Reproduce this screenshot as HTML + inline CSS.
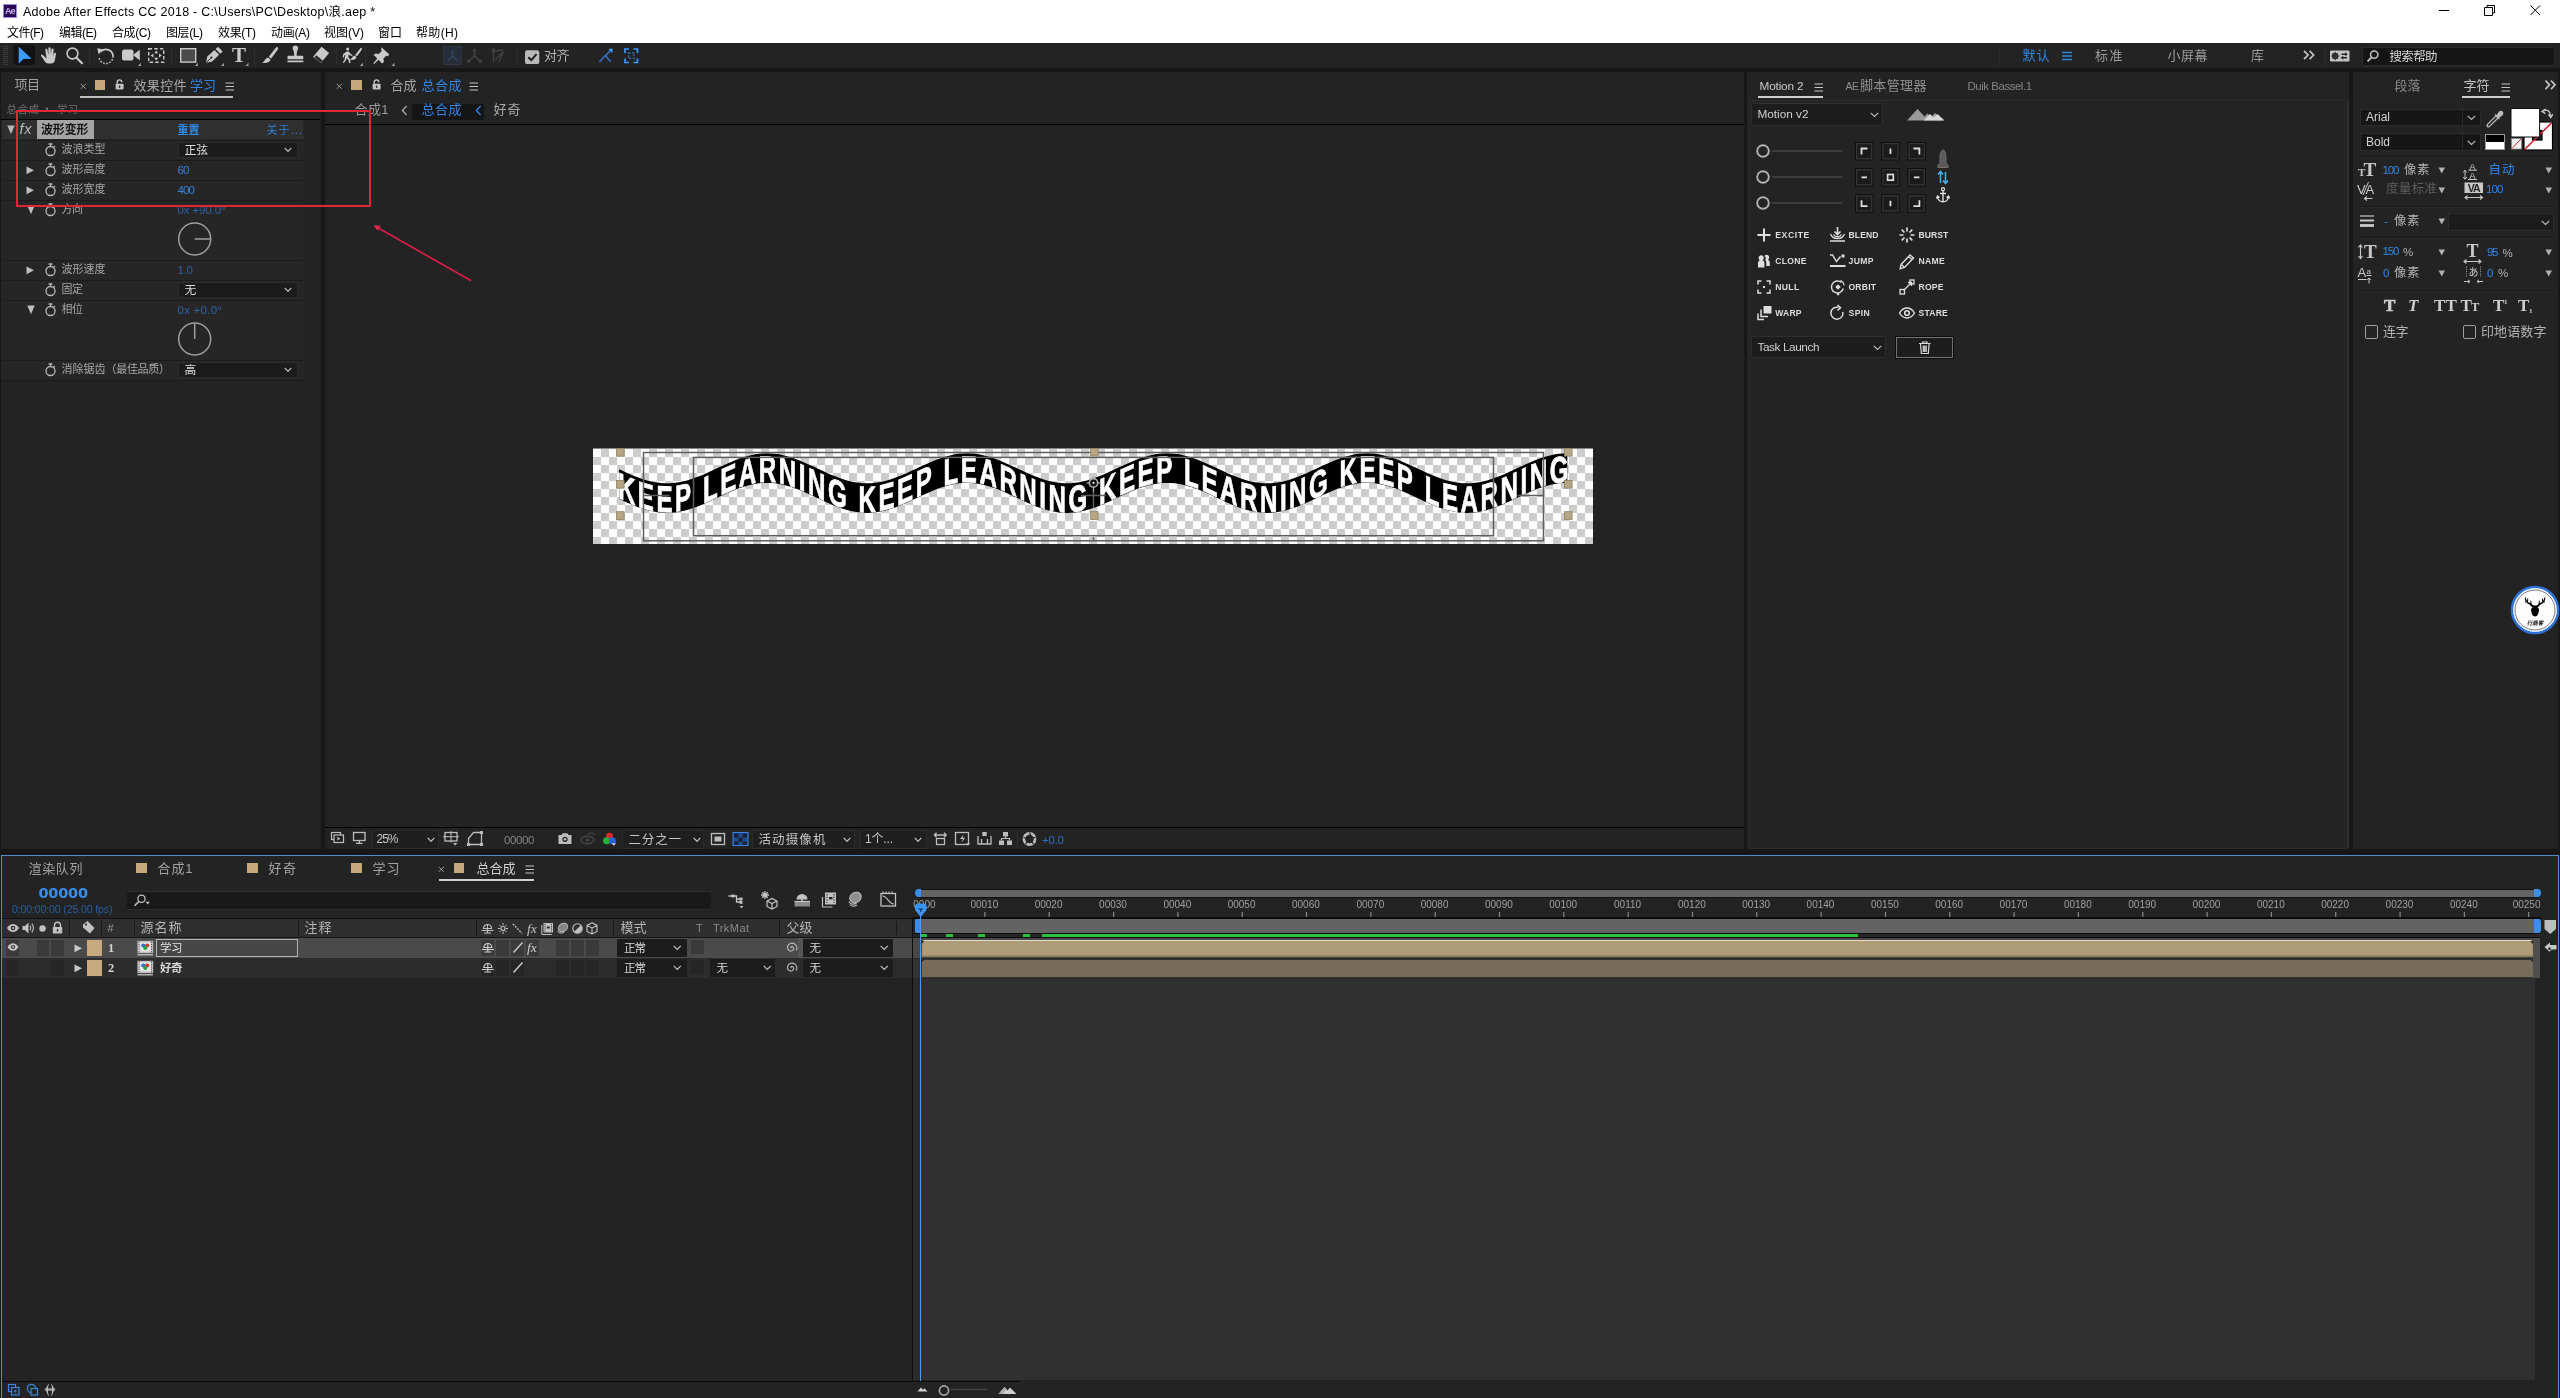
<!DOCTYPE html>
<html lang="zh-CN"><head><meta charset="utf-8"><title>Adobe After Effects CC 2018</title>
<style>
html,body{margin:0;padding:0;}
body{width:2560px;height:1398px;overflow:hidden;background:#171717;position:relative;font-family:"Liberation Sans","Noto Sans CJK SC",sans-serif;font-size:12px;}
#app{position:absolute;left:0;top:0;width:2560px;height:1398px;overflow:hidden;will-change:transform;}
#app div,#app span.t,#app svg{position:absolute;box-sizing:border-box;}
span.t{white-space:pre;display:block;}
svg{overflow:visible;display:block;}
svg{font-family:"Liberation Sans","Noto Sans CJK SC",sans-serif;}
</style></head><body><div id="app">
<div style="left:0px;top:0px;width:2560px;height:43px;background:#ffffff;"></div>
<div style="left:3px;top:4px;width:14px;height:14px;background:#2a0a4e;border:1px solid #9a8ae8;"></div>
<span class="t" style="left:5px;top:4.7px;height:13px;line-height:13px;font-size:9px;color:#c9b6ff;font-weight:700;letter-spacing:-1.02px;">Ae</span>
<span class="t" style="left:23px;top:2.5px;height:18px;line-height:18px;font-size:12.5px;color:#000;letter-spacing:0.25px;">Adobe After Effects CC 2018 - C:\Users\PC\Desktop\浪.aep *</span>
<span class="t" style="left:7px;top:24.9px;height:17px;line-height:17px;font-size:12px;color:#000;letter-spacing:-0.58px;">文件(F)</span>
<span class="t" style="left:59px;top:24.9px;height:17px;line-height:17px;font-size:12px;color:#000;letter-spacing:-0.50px;">编辑(E)</span>
<span class="t" style="left:112px;top:24.9px;height:17px;line-height:17px;font-size:12px;color:#000;letter-spacing:-0.42px;">合成(C)</span>
<span class="t" style="left:166px;top:24.9px;height:17px;line-height:17px;font-size:12px;color:#000;letter-spacing:-0.42px;">图层(L)</span>
<span class="t" style="left:218px;top:24.9px;height:17px;line-height:17px;font-size:12px;color:#000;letter-spacing:-0.33px;">效果(T)</span>
<span class="t" style="left:271px;top:24.9px;height:17px;line-height:17px;font-size:12px;color:#000;letter-spacing:-0.25px;">动画(A)</span>
<span class="t" style="left:324px;top:24.9px;height:17px;line-height:17px;font-size:12px;color:#000;">视图(V)</span>
<span class="t" style="left:378px;top:24.9px;height:17px;line-height:17px;font-size:12px;color:#000;letter-spacing:-0.02px;">窗口</span>
<span class="t" style="left:416px;top:24.9px;height:17px;line-height:17px;font-size:12px;color:#000;letter-spacing:0.33px;">帮助(H)</span>
<svg style="left:2430px;top:0px;" width="130" height="22" viewBox="0 0 130 22"><path d="M9 10.5H19M54.5 7.5H62.5V15.5H54.5ZM57 7.5V5.5H64.5V13H62.5M100.5 5.5L110 15M110 5.5L100.5 15" stroke="#000" stroke-width="1" fill="none"/></svg>
<div style="left:0px;top:43px;width:2560px;height:25px;background:#232323;"></div>
<div style="left:1px;top:72px;width:320px;height:777px;background:#232323;"></div>
<div style="left:325px;top:72px;width:1419px;height:777px;background:#232323;"></div>
<div style="left:1747px;top:72px;width:602px;height:777px;background:#232323;"></div>
<div style="left:2353px;top:72px;width:205px;height:777px;background:#232323;"></div>
<div style="left:1px;top:855px;width:2558px;height:543px;background:#232323;border:1px solid #568ccb;border-top-width:1.400px;border-bottom:none;"></div>
<svg style="left:0px;top:0px;" width="700" height="70" viewBox="0 0 700 70"><rect x="3" y="46" width="5" height="1" fill="#3a3a3a"/><rect x="3" y="48" width="5" height="1" fill="#3a3a3a"/><rect x="3" y="50" width="5" height="1" fill="#3a3a3a"/><rect x="3" y="52" width="5" height="1" fill="#3a3a3a"/><rect x="3" y="54" width="5" height="1" fill="#3a3a3a"/><rect x="3" y="56" width="5" height="1" fill="#3a3a3a"/><rect x="3" y="58" width="5" height="1" fill="#3a3a3a"/><rect x="3" y="60" width="5" height="1" fill="#3a3a3a"/><rect x="3" y="62" width="5" height="1" fill="#3a3a3a"/><rect x="3" y="64" width="5" height="1" fill="#3a3a3a"/><rect x="13.5" y="45" width="21.5" height="20" rx="3" fill="#131313"/><path d="M18.7 46.8L18.7 63.8L23.3 59L31.6 58.8Z" fill="#3b9bff"/><path d="M43.2 55.2c-1.4-1.5-2.9-0.3-1.9 1.1l3.6 5.3c0.9 1.3 1.9 1.8 3.6 1.8h3.2c1.8 0 2.8-1.1 3.1-2.8l1.2-6.3c0.3-1.6-1.7-2-2.1-0.5l-0.7 2.6 0.4-6.6c0.1-1.6-2-1.7-2.2-0.2l-0.5 5.2-0.3-6.5c-0.1-1.6-2.2-1.5-2.2 0.1l0 6.5-1-5.2c-0.3-1.5-2.3-1.1-2.1 0.4l1.2 8.4z" fill="#c9c9c9"/><circle cx="72.5" cy="53.5" r="5.4" fill="none" stroke="#c9c9c9" stroke-width="1.6"/><path d="M76.5 57.8L82 63.2" stroke="#c9c9c9" stroke-width="2.2" stroke-linecap="round"/><rect x="89.0" y="46" width="1" height="19" fill="#2f2f2f"/><rect x="171.0" y="46" width="1" height="19" fill="#2f2f2f"/><rect x="254.0" y="46" width="1" height="19" fill="#2f2f2f"/><rect x="336.0" y="46" width="1" height="19" fill="#2f2f2f"/><rect x="365.0" y="46" width="1" height="19" fill="#2f2f2f"/><path d="M101 51.5A7 7 0 0 1 113 56" fill="none" stroke="#c9c9c9" stroke-width="1.7"/><path d="M113 56A7 7 0 1 1 99 57" fill="none" stroke="#c9c9c9" stroke-width="1.5" stroke-dasharray="1.6 1.6"/><path d="M97.2 48.2L103.6 49.4L98.6 54.3Z" fill="#c9c9c9"/><rect x="122" y="49.5" width="11.5" height="11" rx="2.6" fill="#c9c9c9"/><path d="M133 55L139.8 49.8V60.6Z" fill="#c9c9c9"/><path d="M141 66L141 62.8L137.8 66Z" fill="#9a9a9a"/><rect x="148.7" y="48.7" width="15" height="13.6" fill="none" stroke="#c9c9c9" stroke-width="1.4" stroke-dasharray="3.4 2.2"/><path d="M156.2 50.6l2 2.6h-4zM156.2 60.4l2-2.6h-4zM150.6 55.5l2.8-2v4zM161.8 55.5l-2.8-2v4z" fill="#c9c9c9"/><rect x="180.7" y="48.7" width="15" height="13.4" fill="#4b4b4b" stroke="#c9c9c9" stroke-width="1.4"/><path d="M198 66L198 62.8L194.8 66Z" fill="#9a9a9a"/><path d="M206 62.8l1.3-6.3 7.2-6.6 4.6 4.9-7 6.6zM215.6 48.9l2.4-2.2 4.6 4.9-2.4 2.2z" fill="#c9c9c9"/><path d="M206.3 62.5l4.4-4.2" stroke="#232323" stroke-width="1"/><circle cx="211.4" cy="57.6" r="1.1" fill="#232323"/><path d="M224 66L224 62.8L220.8 66Z" fill="#9a9a9a"/><text x="239" y="62.3" font-size="21" font-weight="700" text-anchor="middle" fill="#c9c9c9" style="font-family:'Liberation Serif',serif">T</text><path d="M248.5 66L248.5 62.8L245.3 66Z" fill="#9a9a9a"/><path d="M277.6 47.2c0.8 0.6 0.7 1.4 0.2 2.2l-6.6 9.2-2.4-1.8 7-9c0.5-0.7 1.2-1 1.8-0.6zM268 57.6l2.6 2c-0.4 2.4-3.3 3.9-8.4 3.4 2.5-1 2.2-4.300 5.800-5.400z" fill="#c9c9c9"/><path d="M292.600 47.600a2.9 2.9 0 0 1 5.600 0c0.3 1.800-1.200 2.600-1.400 4.800l-0.200 3.400h5.300c0.900 0 1.400 0.500 1.400 1.400v2h-15.800v-2c0-0.900 0.500-1.400 1.400-1.400h5.300l-0.200-3.400c-0.200-2.200-1.700-3-1.400-4.800zM287.500 60.600h15.800v1.600h-15.800z" fill="#c9c9c9"/><path d="M321.500 46.800l7.600 6.200-8.300 10-7.700-6.300z" fill="#c9c9c9"/><path d="M316.300 55.300l6.300 5.100-1.900 2.300-6.200-5.200z" fill="#2a2a2a"/><circle cx="347.600" cy="49" r="1.500" fill="#c9c9c9"/><path d="M344 53.200l3-1.700h1.800l1.900 2.600 1.900 0.800-0.500 1.200-2.500-0.800-0.900-1.100-0.300 3 1.800 2.300 0.300 3.600h-1.500l-0.500-3-1.800-1.800-0.900 2.300-2 2.500-1.100-0.900 1.800-2.400 0.800-5.100-1 0.600-0.400 2.200-1.300-0.200 0.500-3z" fill="#c9c9c9"/><path d="M361.600 48c0.600 0.500 0.500 1.100 0.100 1.700l-4.700 6.600-1.900-1.400 5.100-6.500c0.400-0.500 0.900-0.800 1.400-0.400zM354.500 55.600l2 1.600c-0.300 1.900-2.600 3-6.500 2.600 1.900-0.800 1.700-3.300 4.500-4.200z" fill="#c9c9c9"/><path d="M363 66L363 62.8L359.8 66Z" fill="#9a9a9a"/><path d="M381.400 47.200l8 7.400-1.800 1.600-1.500-0.400-2.700 2.900 0.500 3.300-1.800 1.500-3.600-3.800-4.300 4.300-0.900-0.800 4-4.600-3.600-3.700 1.800-1.500 3.200 0.600 2.900-2.800-0.300-1.600z" fill="#c9c9c9"/><path d="M394.5 66L394.5 62.8L391.3 66Z" fill="#9a9a9a"/><rect x="443.500" y="46.500" width="18" height="18" fill="#262d3a" stroke="#2f3644" stroke-width="1"/><path d="M452.500 50v6l-5 5M452.500 56l5 5" stroke="#33435f" stroke-width="1.600" fill="none"/><path d="M474.500 50.500v5.500l-5.500 5M474.500 56l5.500 5" stroke="#454545" stroke-width="1.500" fill="none"/><circle cx="474.500" cy="50" r="1.600" fill="#454545"/><circle cx="468.600" cy="61.200" r="1.600" fill="#454545"/><circle cx="480.400" cy="61.200" r="1.600" fill="#454545"/><path d="M493.500 49.500v13M492 52l11-2.500M495 60l8-8M499 62l4.500-11" stroke="#424242" stroke-width="1.300" fill="none"/><circle cx="493.500" cy="49.500" r="1.500" fill="#454545"/><rect x="516.500" y="46" width="1" height="19" fill="#2f2f2f"/><rect x="525" y="50.300" width="14.300" height="13.800" rx="2.200" fill="#b9b9b9"/><path d="M528.300 57.200l3 2.900 5.200-6" stroke="#1c1c1c" stroke-width="2" fill="none"/><path d="M599.500 62l5.800-6.600 5.400 6.400" stroke="#3a73c4" stroke-width="1.500" fill="none"/><path d="M605.800 55.800l4.600-5.600" stroke="#3a73c4" stroke-width="1.400"/><path d="M608.400 49l4.200-0.400-0.400 4.600z" fill="#3b9bff"/><path d="M625 53v-4h4M633.500 49h4v4M637.500 58.500v4h-4M629 62.500h-4v-4" stroke="#3b9bff" stroke-width="1.700" fill="none"/><rect x="628.600" y="52.900" width="5.400" height="5.400" fill="none" stroke="#3a73c4" stroke-width="1.300" stroke-dasharray="2 1.400"/></svg>
<span class="t" style="left:544px;top:47.3px;height:18px;line-height:18px;font-size:13px;color:#b4b4b4;letter-spacing:-0.52px;">对齐</span>
<div style="left:1999px;top:45px;width:1px;height:21px;background:#2c2c2c;"></div>
<div style="left:2325px;top:45px;width:1px;height:21px;background:#2c2c2c;"></div>
<span class="t" style="left:2022.5px;top:47px;height:18px;line-height:18px;font-size:13px;color:#2f86e6;letter-spacing:0.98px;">默认</span>
<svg style="left:2061px;top:50px;" width="12" height="12" viewBox="0 0 12 12"><path d="M1 2.500h10M1 6h10M1 9.500h10" stroke="#2f86e6" stroke-width="1.300"/></svg>
<span class="t" style="left:2095px;top:47px;height:18px;line-height:18px;font-size:13px;color:#9c9c9c;letter-spacing:1.48px;">标准</span>
<span class="t" style="left:2167.5px;top:47px;height:18px;line-height:18px;font-size:13px;color:#9c9c9c;letter-spacing:0.49px;">小屏幕</span>
<span class="t" style="left:2251px;top:47px;height:18px;line-height:18px;font-size:13px;color:#9c9c9c;">库</span>
<svg style="left:2302px;top:49px;" width="14" height="12" viewBox="0 0 14 12"><path d="M2 1.800l4 4.200-4 4.200M7.600 1.800l4 4.200-4 4.200" stroke="#c4c4c4" stroke-width="1.700" fill="none"/></svg>
<svg style="left:2330px;top:50px;" width="20" height="12" viewBox="0 0 20 12"><rect x="0" y="0.500" width="19.500" height="11" rx="1.200" fill="#c4c4c4"/><circle cx="5.200" cy="6" r="2.300" fill="none" stroke="#232323" stroke-width="1.600"/><path d="M5.200 1.700v8.600M0.900 6h8.600M2.200 3l6 6M8.200 3l-6 6" stroke="#232323" stroke-width="0.900"/><path d="M11.500 4.300h5.500M11.500 7.700h5.500" stroke="#232323" stroke-width="1.400"/><path d="M15.200 2.300l2.600 2-2.600 2zM13.300 5.700l-2.600 2 2.600 2z" fill="#232323"/></svg>
<div style="left:2361.5px;top:47px;width:193.5px;height:18.5px;background:#151515;border-radius:2px;border:1px solid #2c2c2c;"></div>
<svg style="left:2366px;top:49px;" width="14" height="14" viewBox="0 0 14 14"><circle cx="8.200" cy="5.600" r="3.700" fill="none" stroke="#c4c4c4" stroke-width="1.500"/><path d="M5.600 8.300L1.500 12.400" stroke="#c4c4c4" stroke-width="1.800"/></svg>
<span class="t" style="left:2389.5px;top:47.6px;height:18px;line-height:18px;font-size:12.5px;color:#d6d6d6;letter-spacing:-0.67px;">搜索帮助</span>
<span class="t" style="left:14.5px;top:76px;height:18px;line-height:18px;font-size:13px;color:#a2a2a2;letter-spacing:-0.52px;">项目</span>
<svg style="left:79.5px;top:83px;" width="7" height="7" viewBox="0 0 7 7"><path d="M0.800 0.800l5 5M5.800 0.800l-5 5" stroke="#9a9a9a" stroke-width="1"/></svg>
<div style="left:94.5px;top:80.3px;width:10.5px;height:9.7px;background:#c5a77c;"></div>
<svg style="left:114.5px;top:78.5px;" width="10" height="11" viewBox="0 0 10 11"><path d="M2.200 4.800V3.200a2.300 2.300 0 0 1 4.600 0" fill="none" stroke="#c4c4c4" stroke-width="1.400"/><rect x="0.600" y="4.800" width="8" height="5.600" rx="0.800" fill="#c4c4c4"/><rect x="3.900" y="6.600" width="1.400" height="2.200" fill="#232323"/></svg>
<span class="t" style="left:133.5px;top:76.5px;height:18px;line-height:18px;font-size:13px;color:#a8a8a8;letter-spacing:0.33px;">效果控件</span>
<span class="t" style="left:190px;top:76.5px;height:18px;line-height:18px;font-size:13px;color:#2f86e6;letter-spacing:-0.02px;">学习</span>
<svg style="left:224.5px;top:82px;" width="10" height="9" viewBox="0 0 10 9"><path d="M0.500 1h8.500M0.500 4.500h8.500M0.500 8h8.500" stroke="#c4c4c4" stroke-width="1.200"/></svg>
<div style="left:80px;top:96px;width:153px;height:2px;background:#bcbcbc;"></div>
<span class="t" style="left:6.5px;top:102px;height:15px;line-height:15px;font-size:10.5px;color:#6f6f6f;letter-spacing:0.50px;">总合成</span>
<span class="t" style="left:45.5px;top:103px;height:13px;line-height:13px;font-size:9px;color:#6f6f6f;">•</span>
<span class="t" style="left:57px;top:102px;height:15px;line-height:15px;font-size:10.5px;color:#6f6f6f;">学习</span>
<div style="left:1px;top:119px;width:319px;height:1px;background:#000;"></div>
<div style="left:2px;top:120px;width:301.5px;height:260px;background:#262626;"></div>
<div style="left:2px;top:120px;width:301px;height:19.3px;background:#2f2f2f;"></div>
<div style="left:37px;top:120px;width:57px;height:18.8px;background:#a4a4a4;"></div>
<svg style="left:6.5px;top:124.5px;" width="9" height="10" viewBox="0 0 9 10"><path d="M0.300 0.500H7.700L4 9.200Z" fill="#b4b4b4"/></svg>
<span class="t" style="left:19.5px;top:118.8px;height:20px;line-height:20px;font-size:14.5px;color:#b9b9b9;font-style:italic;letter-spacing:0.72px;">fx</span>
<span class="t" style="left:41px;top:121.8px;height:17px;line-height:17px;font-size:12px;color:#141414;font-weight:700;letter-spacing:-0.17px;">波形变形</span>
<span class="t" style="left:177.5px;top:122.5px;height:15px;line-height:15px;font-size:11px;color:#2d8ceb;font-weight:700;">重置</span>
<span class="t" style="left:266.5px;top:122.5px;height:15px;line-height:15px;font-size:11px;color:#2d7fd6;letter-spacing:1.08px;">关于...</span>
<div style="left:2px;top:139.5px;width:301px;height:1px;background:#1c1c1c;"></div>
<svg style="left:45px;top:143px;" width="12" height="14" viewBox="0 0 12 14"><circle cx="5.500" cy="8" r="4.500" fill="none" stroke="#b8b8b8" stroke-width="1.300"/><path d="M3.600 1h3.800M5.500 1v2.400M8.600 4.300l1.300-1.300" stroke="#b8b8b8" stroke-width="1.300" fill="none"/></svg>
<span class="t" style="left:61.5px;top:142px;height:15px;line-height:15px;font-size:11px;color:#a6a6a6;">波浪类型</span>
<div style="left:178px;top:141.5px;width:119.5px;height:16.8px;background:#1b1b1b;border:1px solid #2c2c2c;"></div>
<span class="t" style="left:184.5px;top:141.7px;height:17px;line-height:17px;font-size:11.8px;color:#dcdcdc;">正弦</span>
<svg style="left:284px;top:147.3px;" width="8" height="6" viewBox="0 0 8 6"><path d="M0.700 0.900l3.3 3.600 3.3-3.600" stroke="#c4c4c4" stroke-width="1.150" fill="none"/></svg>
<div style="left:2px;top:159.5px;width:301px;height:1px;background:#1c1c1c;"></div>
<svg style="left:26px;top:165.5px;" width="9" height="9" viewBox="0 0 9 9"><path d="M0.500 0.500L8 4.300L0.500 8.200Z" fill="#bdbdbd"/></svg>
<svg style="left:45px;top:163px;" width="12" height="14" viewBox="0 0 12 14"><circle cx="5.500" cy="8" r="4.500" fill="none" stroke="#b8b8b8" stroke-width="1.300"/><path d="M3.600 1h3.800M5.500 1v2.400M8.600 4.300l1.300-1.300" stroke="#b8b8b8" stroke-width="1.300" fill="none"/></svg>
<span class="t" style="left:61.5px;top:162px;height:15px;line-height:15px;font-size:11px;color:#a6a6a6;">波形高度</span>
<span class="t" style="left:177.5px;top:162px;height:16px;line-height:16px;font-size:11.5px;color:#3b80d6;letter-spacing:-0.80px;">60</span>
<div style="left:2px;top:179.5px;width:301px;height:1px;background:#1c1c1c;"></div>
<svg style="left:26px;top:185.5px;" width="9" height="9" viewBox="0 0 9 9"><path d="M0.500 0.500L8 4.300L0.500 8.200Z" fill="#bdbdbd"/></svg>
<svg style="left:45px;top:183px;" width="12" height="14" viewBox="0 0 12 14"><circle cx="5.500" cy="8" r="4.500" fill="none" stroke="#b8b8b8" stroke-width="1.300"/><path d="M3.600 1h3.800M5.500 1v2.400M8.600 4.300l1.300-1.300" stroke="#b8b8b8" stroke-width="1.300" fill="none"/></svg>
<span class="t" style="left:61.5px;top:182px;height:15px;line-height:15px;font-size:11px;color:#a6a6a6;">波形宽度</span>
<span class="t" style="left:177.5px;top:182px;height:16px;line-height:16px;font-size:11.5px;color:#3b80d6;letter-spacing:-0.84px;">400</span>
<div style="left:2px;top:199.5px;width:301px;height:1px;background:#1c1c1c;"></div>
<svg style="left:26.5px;top:204.5px;" width="9" height="10" viewBox="0 0 9 10"><path d="M0.300 0.500H7.700L4 9.200Z" fill="#bdbdbd"/></svg>
<svg style="left:45px;top:203px;" width="12" height="14" viewBox="0 0 12 14"><circle cx="5.500" cy="8" r="4.500" fill="none" stroke="#b8b8b8" stroke-width="1.300"/><path d="M3.600 1h3.800M5.500 1v2.400M8.600 4.300l1.300-1.300" stroke="#b8b8b8" stroke-width="1.300" fill="none"/></svg>
<span class="t" style="left:61.5px;top:202px;height:15px;line-height:15px;font-size:11px;color:#a6a6a6;letter-spacing:-0.50px;">方向</span>
<span class="t" style="left:177.5px;top:202px;height:16px;line-height:16px;font-size:11.5px;color:#2e63a8;letter-spacing:-0.13px;">0x +90.0°</span>
<div style="left:2px;top:259.5px;width:301px;height:1px;background:#1c1c1c;"></div>
<svg style="left:26px;top:265.5px;" width="9" height="9" viewBox="0 0 9 9"><path d="M0.500 0.500L8 4.300L0.500 8.200Z" fill="#bdbdbd"/></svg>
<svg style="left:45px;top:263px;" width="12" height="14" viewBox="0 0 12 14"><circle cx="5.500" cy="8" r="4.500" fill="none" stroke="#b8b8b8" stroke-width="1.300"/><path d="M3.600 1h3.800M5.500 1v2.400M8.600 4.300l1.300-1.300" stroke="#b8b8b8" stroke-width="1.300" fill="none"/></svg>
<span class="t" style="left:61.5px;top:262px;height:15px;line-height:15px;font-size:11px;color:#a6a6a6;">波形速度</span>
<span class="t" style="left:177.5px;top:262px;height:16px;line-height:16px;font-size:11.5px;color:#2c5f9f;letter-spacing:-0.25px;">1.0</span>
<div style="left:2px;top:279.5px;width:301px;height:1px;background:#1c1c1c;"></div>
<svg style="left:45px;top:283px;" width="12" height="14" viewBox="0 0 12 14"><circle cx="5.500" cy="8" r="4.500" fill="none" stroke="#b8b8b8" stroke-width="1.300"/><path d="M3.600 1h3.800M5.500 1v2.400M8.600 4.300l1.300-1.300" stroke="#b8b8b8" stroke-width="1.300" fill="none"/></svg>
<span class="t" style="left:61.5px;top:282px;height:15px;line-height:15px;font-size:11px;color:#a6a6a6;letter-spacing:-0.50px;">固定</span>
<div style="left:178px;top:281.5px;width:119.5px;height:16.8px;background:#1b1b1b;border:1px solid #2c2c2c;"></div>
<span class="t" style="left:184.5px;top:281.7px;height:17px;line-height:17px;font-size:11.8px;color:#dcdcdc;">无</span>
<svg style="left:284px;top:287.3px;" width="8" height="6" viewBox="0 0 8 6"><path d="M0.700 0.900l3.3 3.600 3.3-3.600" stroke="#c4c4c4" stroke-width="1.150" fill="none"/></svg>
<div style="left:2px;top:299.5px;width:301px;height:1px;background:#1c1c1c;"></div>
<svg style="left:26.5px;top:304.5px;" width="9" height="10" viewBox="0 0 9 10"><path d="M0.300 0.500H7.700L4 9.200Z" fill="#bdbdbd"/></svg>
<svg style="left:45px;top:303px;" width="12" height="14" viewBox="0 0 12 14"><circle cx="5.500" cy="8" r="4.500" fill="none" stroke="#b8b8b8" stroke-width="1.300"/><path d="M3.600 1h3.800M5.500 1v2.400M8.600 4.300l1.300-1.300" stroke="#b8b8b8" stroke-width="1.300" fill="none"/></svg>
<span class="t" style="left:61.5px;top:302px;height:15px;line-height:15px;font-size:11px;color:#a6a6a6;letter-spacing:-0.50px;">相位</span>
<span class="t" style="left:177.5px;top:302px;height:16px;line-height:16px;font-size:11.5px;color:#2e63a8;letter-spacing:0.26px;">0x +0.0°</span>
<div style="left:2px;top:359.5px;width:301px;height:1px;background:#1c1c1c;"></div>
<svg style="left:45px;top:363px;" width="12" height="14" viewBox="0 0 12 14"><circle cx="5.500" cy="8" r="4.500" fill="none" stroke="#b8b8b8" stroke-width="1.300"/><path d="M3.600 1h3.800M5.500 1v2.400M8.600 4.300l1.300-1.300" stroke="#b8b8b8" stroke-width="1.300" fill="none"/></svg>
<span class="t" style="left:61.5px;top:362px;height:15px;line-height:15px;font-size:11px;color:#a6a6a6;">消除锯齿</span>
<span class="t" style="left:105.5px;top:362px;height:15px;line-height:15px;font-size:11px;color:#a6a6a6;letter-spacing:-0.30px;">（最佳品质）</span>
<div style="left:178px;top:361.5px;width:119.5px;height:16.8px;background:#1b1b1b;border:1px solid #2c2c2c;"></div>
<span class="t" style="left:184.5px;top:361.7px;height:17px;line-height:17px;font-size:11.8px;color:#dcdcdc;">高</span>
<svg style="left:284px;top:367.3px;" width="8" height="6" viewBox="0 0 8 6"><path d="M0.700 0.900l3.3 3.600 3.3-3.600" stroke="#c4c4c4" stroke-width="1.150" fill="none"/></svg>
<div style="left:2px;top:379.5px;width:301px;height:1px;background:#1c1c1c;"></div>
<div style="left:2px;top:259.5px;width:301px;height:1px;background:#1c1c1c;"></div>
<svg style="left:170px;top:218.8px;" width="50" height="40" viewBox="0 0 50 40"><circle cx="24.700" cy="20" r="16" fill="none" stroke="#9e9e9e" stroke-width="1.500"/><path d="M24.700 20L40.7 20.0" stroke="#9e9e9e" stroke-width="1.500"/></svg>
<svg style="left:170px;top:318.8px;" width="50" height="40" viewBox="0 0 50 40"><circle cx="24.700" cy="20" r="16" fill="none" stroke="#9e9e9e" stroke-width="1.500"/><path d="M24.700 20L24.7 4.0" stroke="#9e9e9e" stroke-width="1.500"/></svg>
<svg style="left:335.5px;top:83px;" width="7" height="7" viewBox="0 0 7 7"><path d="M0.800 0.800l5 5M5.800 0.800l-5 5" stroke="#9a9a9a" stroke-width="1"/></svg>
<div style="left:351px;top:80.3px;width:10.5px;height:9.7px;background:#c5a77c;"></div>
<svg style="left:371.5px;top:78.5px;" width="10" height="11" viewBox="0 0 10 11"><path d="M2.200 4.800V3.200a2.300 2.300 0 0 1 4.600 0" fill="none" stroke="#c4c4c4" stroke-width="1.400"/><rect x="0.600" y="4.800" width="8" height="5.600" rx="0.800" fill="#c4c4c4"/><rect x="3.900" y="6.600" width="1.400" height="2.200" fill="#232323"/></svg>
<span class="t" style="left:390.5px;top:76.5px;height:18px;line-height:18px;font-size:13px;color:#a8a8a8;letter-spacing:-0.02px;">合成</span>
<span class="t" style="left:421.5px;top:76.5px;height:18px;line-height:18px;font-size:13px;color:#2f86e6;letter-spacing:0.49px;">总合成</span>
<svg style="left:468.5px;top:82px;" width="10" height="9" viewBox="0 0 10 9"><path d="M0.500 1h8.500M0.500 4.500h8.500M0.500 8h8.500" stroke="#c4c4c4" stroke-width="1.200"/></svg>
<span class="t" style="left:354.5px;top:101.3px;height:18px;line-height:18px;font-size:13px;color:#9a9a9a;letter-spacing:0.38px;">合成1</span>
<svg style="left:401px;top:105px;" width="7" height="11" viewBox="0 0 7 11"><path d="M5.600 1L1.400 5.500l4.200 4.500" stroke="#a8a8a8" stroke-width="1.300" fill="none"/></svg>
<div style="left:412px;top:103.5px;width:71.5px;height:16px;background:#151515;border-radius:2px;"></div>
<span class="t" style="left:421.5px;top:101.3px;height:18px;line-height:18px;font-size:13px;color:#2f86e6;letter-spacing:0.49px;">总合成</span>
<svg style="left:475px;top:105px;" width="7" height="11" viewBox="0 0 7 11"><path d="M5.600 1L1.400 5.500l4.200 4.500" stroke="#2f86e6" stroke-width="1.300" fill="none"/></svg>
<span class="t" style="left:493.5px;top:101.3px;height:18px;line-height:18px;font-size:13px;color:#a8a8a8;letter-spacing:0.98px;">好奇</span>
<div style="left:325px;top:124px;width:1419px;height:1px;background:#000;"></div>
<div style="left:593px;top:449px;width:1000px;height:95px;background:#fff;background-image:conic-gradient(#ccc 25%,#fff 0 50%,#ccc 0 75%,#fff 0);background-size:16px 16px;"></div>
<div style="left:593px;top:448px;width:1000px;height:1px;background:rgba(235,235,235,0.5);"></div>
<svg style="left:593px;top:449px;" width="1000" height="95" viewBox="0 0 1000 95"><clipPath id="bandclip"><polygon points="26.0,20.24 30.0,22.11 34.0,23.94 38.0,25.69 42.0,27.34 46.0,28.86 50.0,30.23 54.0,31.44 58.0,32.44 62.0,33.25 66.0,33.83 70.0,34.18 74.0,34.30 78.0,34.18 82.0,33.83 86.0,33.25 90.0,32.44 94.0,31.44 98.0,30.23 102.0,28.86 106.0,27.34 110.0,25.69 114.0,23.94 118.0,22.11 122.0,20.24 126.0,18.36 130.0,16.49 134.0,14.66 138.0,12.91 142.0,11.26 146.0,9.74 150.0,8.37 154.0,7.16 158.0,6.16 162.0,5.35 166.0,4.77 170.0,4.42 174.0,4.30 178.0,4.42 182.0,4.77 186.0,5.35 190.0,6.16 194.0,7.16 198.0,8.37 202.0,9.74 206.0,11.26 210.0,12.91 214.0,14.66 218.0,16.49 222.0,18.36 226.0,20.24 230.0,22.11 234.0,23.94 238.0,25.69 242.0,27.34 246.0,28.86 250.0,30.23 254.0,31.44 258.0,32.44 262.0,33.25 266.0,33.83 270.0,34.18 274.0,34.30 278.0,34.18 282.0,33.83 286.0,33.25 290.0,32.44 294.0,31.44 298.0,30.23 302.0,28.86 306.0,27.34 310.0,25.69 314.0,23.94 318.0,22.11 322.0,20.24 326.0,18.36 330.0,16.49 334.0,14.66 338.0,12.91 342.0,11.26 346.0,9.74 350.0,8.37 354.0,7.16 358.0,6.16 362.0,5.35 366.0,4.77 370.0,4.42 374.0,4.30 378.0,4.42 382.0,4.77 386.0,5.35 390.0,6.16 394.0,7.16 398.0,8.37 402.0,9.74 406.0,11.26 410.0,12.91 414.0,14.66 418.0,16.49 422.0,18.36 426.0,20.24 430.0,22.11 434.0,23.94 438.0,25.69 442.0,27.34 446.0,28.86 450.0,30.23 454.0,31.44 458.0,32.44 462.0,33.25 466.0,33.83 470.0,34.18 474.0,34.30 478.0,34.18 482.0,33.83 486.0,33.25 490.0,32.44 494.0,31.44 498.0,30.23 502.0,28.86 506.0,27.34 510.0,25.69 514.0,23.94 518.0,22.11 522.0,20.24 526.0,18.36 530.0,16.49 534.0,14.66 538.0,12.91 542.0,11.26 546.0,9.74 550.0,8.37 554.0,7.16 558.0,6.16 562.0,5.35 566.0,4.77 570.0,4.42 574.0,4.30 578.0,4.42 582.0,4.77 586.0,5.35 590.0,6.16 594.0,7.16 598.0,8.37 602.0,9.74 606.0,11.26 610.0,12.91 614.0,14.66 618.0,16.49 622.0,18.36 626.0,20.24 630.0,22.11 634.0,23.94 638.0,25.69 642.0,27.34 646.0,28.86 650.0,30.23 654.0,31.44 658.0,32.44 662.0,33.25 666.0,33.83 670.0,34.18 674.0,34.30 678.0,34.18 682.0,33.83 686.0,33.25 690.0,32.44 694.0,31.44 698.0,30.23 702.0,28.86 706.0,27.34 710.0,25.69 714.0,23.94 718.0,22.11 722.0,20.24 726.0,18.36 730.0,16.49 734.0,14.66 738.0,12.91 742.0,11.26 746.0,9.74 750.0,8.37 754.0,7.16 758.0,6.16 762.0,5.35 766.0,4.77 770.0,4.42 774.0,4.30 778.0,4.42 782.0,4.77 786.0,5.35 790.0,6.16 794.0,7.16 798.0,8.37 802.0,9.74 806.0,11.26 810.0,12.91 814.0,14.66 818.0,16.49 822.0,18.36 826.0,20.24 830.0,22.11 834.0,23.94 838.0,25.69 842.0,27.34 846.0,28.86 850.0,30.23 854.0,31.44 858.0,32.44 862.0,33.25 866.0,33.83 870.0,34.18 874.0,34.30 878.0,34.18 882.0,33.83 886.0,33.25 890.0,32.44 894.0,31.44 898.0,30.23 902.0,28.86 906.0,27.34 910.0,25.69 914.0,23.94 918.0,22.11 922.0,20.24 926.0,18.36 930.0,16.49 934.0,14.66 938.0,12.91 942.0,11.26 946.0,9.74 950.0,8.37 954.0,7.16 958.0,6.16 962.0,5.35 966.0,4.77 970.0,4.42 974.0,4.30 974.3,4.30 974.3,33.90 974.0,33.90 970.0,34.02 966.0,34.37 962.0,34.95 958.0,35.76 954.0,36.76 950.0,37.97 946.0,39.34 942.0,40.86 938.0,42.51 934.0,44.26 930.0,46.09 926.0,47.96 922.0,49.84 918.0,51.71 914.0,53.54 910.0,55.29 906.0,56.94 902.0,58.46 898.0,59.83 894.0,61.04 890.0,62.04 886.0,62.85 882.0,63.43 878.0,63.78 874.0,63.90 870.0,63.78 866.0,63.43 862.0,62.85 858.0,62.04 854.0,61.04 850.0,59.83 846.0,58.46 842.0,56.94 838.0,55.29 834.0,53.54 830.0,51.71 826.0,49.84 822.0,47.96 818.0,46.09 814.0,44.26 810.0,42.51 806.0,40.86 802.0,39.34 798.0,37.97 794.0,36.76 790.0,35.76 786.0,34.95 782.0,34.37 778.0,34.02 774.0,33.90 770.0,34.02 766.0,34.37 762.0,34.95 758.0,35.76 754.0,36.76 750.0,37.97 746.0,39.34 742.0,40.86 738.0,42.51 734.0,44.26 730.0,46.09 726.0,47.96 722.0,49.84 718.0,51.71 714.0,53.54 710.0,55.29 706.0,56.94 702.0,58.46 698.0,59.83 694.0,61.04 690.0,62.04 686.0,62.85 682.0,63.43 678.0,63.78 674.0,63.90 670.0,63.78 666.0,63.43 662.0,62.85 658.0,62.04 654.0,61.04 650.0,59.83 646.0,58.46 642.0,56.94 638.0,55.29 634.0,53.54 630.0,51.71 626.0,49.84 622.0,47.96 618.0,46.09 614.0,44.26 610.0,42.51 606.0,40.86 602.0,39.34 598.0,37.97 594.0,36.76 590.0,35.76 586.0,34.95 582.0,34.37 578.0,34.02 574.0,33.90 570.0,34.02 566.0,34.37 562.0,34.95 558.0,35.76 554.0,36.76 550.0,37.97 546.0,39.34 542.0,40.86 538.0,42.51 534.0,44.26 530.0,46.09 526.0,47.96 522.0,49.84 518.0,51.71 514.0,53.54 510.0,55.29 506.0,56.94 502.0,58.46 498.0,59.83 494.0,61.04 490.0,62.04 486.0,62.85 482.0,63.43 478.0,63.78 474.0,63.90 470.0,63.78 466.0,63.43 462.0,62.85 458.0,62.04 454.0,61.04 450.0,59.83 446.0,58.46 442.0,56.94 438.0,55.29 434.0,53.54 430.0,51.71 426.0,49.84 422.0,47.96 418.0,46.09 414.0,44.26 410.0,42.51 406.0,40.86 402.0,39.34 398.0,37.97 394.0,36.76 390.0,35.76 386.0,34.95 382.0,34.37 378.0,34.02 374.0,33.90 370.0,34.02 366.0,34.37 362.0,34.95 358.0,35.76 354.0,36.76 350.0,37.97 346.0,39.34 342.0,40.86 338.0,42.51 334.0,44.26 330.0,46.09 326.0,47.96 322.0,49.84 318.0,51.71 314.0,53.54 310.0,55.29 306.0,56.94 302.0,58.46 298.0,59.83 294.0,61.04 290.0,62.04 286.0,62.85 282.0,63.43 278.0,63.78 274.0,63.90 270.0,63.78 266.0,63.43 262.0,62.85 258.0,62.04 254.0,61.04 250.0,59.83 246.0,58.46 242.0,56.94 238.0,55.29 234.0,53.54 230.0,51.71 226.0,49.84 222.0,47.96 218.0,46.09 214.0,44.26 210.0,42.51 206.0,40.86 202.0,39.34 198.0,37.97 194.0,36.76 190.0,35.76 186.0,34.95 182.0,34.37 178.0,34.02 174.0,33.90 170.0,34.02 166.0,34.37 162.0,34.95 158.0,35.76 154.0,36.76 150.0,37.97 146.0,39.34 142.0,40.86 138.0,42.51 134.0,44.26 130.0,46.09 126.0,47.96 122.0,49.84 118.0,51.71 114.0,53.54 110.0,55.29 106.0,56.94 102.0,58.46 98.0,59.83 94.0,61.04 90.0,62.04 86.0,62.85 82.0,63.43 78.0,63.78 74.0,63.90 70.0,63.78 66.0,63.43 62.0,62.85 58.0,62.04 54.0,61.04 50.0,59.83 46.0,58.46 42.0,56.94 38.0,55.29 34.0,53.54 30.0,51.71 26.0,49.84"/></clipPath><polygon points="26.0,20.24 30.0,22.11 34.0,23.94 38.0,25.69 42.0,27.34 46.0,28.86 50.0,30.23 54.0,31.44 58.0,32.44 62.0,33.25 66.0,33.83 70.0,34.18 74.0,34.30 78.0,34.18 82.0,33.83 86.0,33.25 90.0,32.44 94.0,31.44 98.0,30.23 102.0,28.86 106.0,27.34 110.0,25.69 114.0,23.94 118.0,22.11 122.0,20.24 126.0,18.36 130.0,16.49 134.0,14.66 138.0,12.91 142.0,11.26 146.0,9.74 150.0,8.37 154.0,7.16 158.0,6.16 162.0,5.35 166.0,4.77 170.0,4.42 174.0,4.30 178.0,4.42 182.0,4.77 186.0,5.35 190.0,6.16 194.0,7.16 198.0,8.37 202.0,9.74 206.0,11.26 210.0,12.91 214.0,14.66 218.0,16.49 222.0,18.36 226.0,20.24 230.0,22.11 234.0,23.94 238.0,25.69 242.0,27.34 246.0,28.86 250.0,30.23 254.0,31.44 258.0,32.44 262.0,33.25 266.0,33.83 270.0,34.18 274.0,34.30 278.0,34.18 282.0,33.83 286.0,33.25 290.0,32.44 294.0,31.44 298.0,30.23 302.0,28.86 306.0,27.34 310.0,25.69 314.0,23.94 318.0,22.11 322.0,20.24 326.0,18.36 330.0,16.49 334.0,14.66 338.0,12.91 342.0,11.26 346.0,9.74 350.0,8.37 354.0,7.16 358.0,6.16 362.0,5.35 366.0,4.77 370.0,4.42 374.0,4.30 378.0,4.42 382.0,4.77 386.0,5.35 390.0,6.16 394.0,7.16 398.0,8.37 402.0,9.74 406.0,11.26 410.0,12.91 414.0,14.66 418.0,16.49 422.0,18.36 426.0,20.24 430.0,22.11 434.0,23.94 438.0,25.69 442.0,27.34 446.0,28.86 450.0,30.23 454.0,31.44 458.0,32.44 462.0,33.25 466.0,33.83 470.0,34.18 474.0,34.30 478.0,34.18 482.0,33.83 486.0,33.25 490.0,32.44 494.0,31.44 498.0,30.23 502.0,28.86 506.0,27.34 510.0,25.69 514.0,23.94 518.0,22.11 522.0,20.24 526.0,18.36 530.0,16.49 534.0,14.66 538.0,12.91 542.0,11.26 546.0,9.74 550.0,8.37 554.0,7.16 558.0,6.16 562.0,5.35 566.0,4.77 570.0,4.42 574.0,4.30 578.0,4.42 582.0,4.77 586.0,5.35 590.0,6.16 594.0,7.16 598.0,8.37 602.0,9.74 606.0,11.26 610.0,12.91 614.0,14.66 618.0,16.49 622.0,18.36 626.0,20.24 630.0,22.11 634.0,23.94 638.0,25.69 642.0,27.34 646.0,28.86 650.0,30.23 654.0,31.44 658.0,32.44 662.0,33.25 666.0,33.83 670.0,34.18 674.0,34.30 678.0,34.18 682.0,33.83 686.0,33.25 690.0,32.44 694.0,31.44 698.0,30.23 702.0,28.86 706.0,27.34 710.0,25.69 714.0,23.94 718.0,22.11 722.0,20.24 726.0,18.36 730.0,16.49 734.0,14.66 738.0,12.91 742.0,11.26 746.0,9.74 750.0,8.37 754.0,7.16 758.0,6.16 762.0,5.35 766.0,4.77 770.0,4.42 774.0,4.30 778.0,4.42 782.0,4.77 786.0,5.35 790.0,6.16 794.0,7.16 798.0,8.37 802.0,9.74 806.0,11.26 810.0,12.91 814.0,14.66 818.0,16.49 822.0,18.36 826.0,20.24 830.0,22.11 834.0,23.94 838.0,25.69 842.0,27.34 846.0,28.86 850.0,30.23 854.0,31.44 858.0,32.44 862.0,33.25 866.0,33.83 870.0,34.18 874.0,34.30 878.0,34.18 882.0,33.83 886.0,33.25 890.0,32.44 894.0,31.44 898.0,30.23 902.0,28.86 906.0,27.34 910.0,25.69 914.0,23.94 918.0,22.11 922.0,20.24 926.0,18.36 930.0,16.49 934.0,14.66 938.0,12.91 942.0,11.26 946.0,9.74 950.0,8.37 954.0,7.16 958.0,6.16 962.0,5.35 966.0,4.77 970.0,4.42 974.0,4.30 974.3,4.30 974.3,33.90 974.0,33.90 970.0,34.02 966.0,34.37 962.0,34.95 958.0,35.76 954.0,36.76 950.0,37.97 946.0,39.34 942.0,40.86 938.0,42.51 934.0,44.26 930.0,46.09 926.0,47.96 922.0,49.84 918.0,51.71 914.0,53.54 910.0,55.29 906.0,56.94 902.0,58.46 898.0,59.83 894.0,61.04 890.0,62.04 886.0,62.85 882.0,63.43 878.0,63.78 874.0,63.90 870.0,63.78 866.0,63.43 862.0,62.85 858.0,62.04 854.0,61.04 850.0,59.83 846.0,58.46 842.0,56.94 838.0,55.29 834.0,53.54 830.0,51.71 826.0,49.84 822.0,47.96 818.0,46.09 814.0,44.26 810.0,42.51 806.0,40.86 802.0,39.34 798.0,37.97 794.0,36.76 790.0,35.76 786.0,34.95 782.0,34.37 778.0,34.02 774.0,33.90 770.0,34.02 766.0,34.37 762.0,34.95 758.0,35.76 754.0,36.76 750.0,37.97 746.0,39.34 742.0,40.86 738.0,42.51 734.0,44.26 730.0,46.09 726.0,47.96 722.0,49.84 718.0,51.71 714.0,53.54 710.0,55.29 706.0,56.94 702.0,58.46 698.0,59.83 694.0,61.04 690.0,62.04 686.0,62.85 682.0,63.43 678.0,63.78 674.0,63.90 670.0,63.78 666.0,63.43 662.0,62.85 658.0,62.04 654.0,61.04 650.0,59.83 646.0,58.46 642.0,56.94 638.0,55.29 634.0,53.54 630.0,51.71 626.0,49.84 622.0,47.96 618.0,46.09 614.0,44.26 610.0,42.51 606.0,40.86 602.0,39.34 598.0,37.97 594.0,36.76 590.0,35.76 586.0,34.95 582.0,34.37 578.0,34.02 574.0,33.90 570.0,34.02 566.0,34.37 562.0,34.95 558.0,35.76 554.0,36.76 550.0,37.97 546.0,39.34 542.0,40.86 538.0,42.51 534.0,44.26 530.0,46.09 526.0,47.96 522.0,49.84 518.0,51.71 514.0,53.54 510.0,55.29 506.0,56.94 502.0,58.46 498.0,59.83 494.0,61.04 490.0,62.04 486.0,62.85 482.0,63.43 478.0,63.78 474.0,63.90 470.0,63.78 466.0,63.43 462.0,62.85 458.0,62.04 454.0,61.04 450.0,59.83 446.0,58.46 442.0,56.94 438.0,55.29 434.0,53.54 430.0,51.71 426.0,49.84 422.0,47.96 418.0,46.09 414.0,44.26 410.0,42.51 406.0,40.86 402.0,39.34 398.0,37.97 394.0,36.76 390.0,35.76 386.0,34.95 382.0,34.37 378.0,34.02 374.0,33.90 370.0,34.02 366.0,34.37 362.0,34.95 358.0,35.76 354.0,36.76 350.0,37.97 346.0,39.34 342.0,40.86 338.0,42.51 334.0,44.26 330.0,46.09 326.0,47.96 322.0,49.84 318.0,51.71 314.0,53.54 310.0,55.29 306.0,56.94 302.0,58.46 298.0,59.83 294.0,61.04 290.0,62.04 286.0,62.85 282.0,63.43 278.0,63.78 274.0,63.90 270.0,63.78 266.0,63.43 262.0,62.85 258.0,62.04 254.0,61.04 250.0,59.83 246.0,58.46 242.0,56.94 238.0,55.29 234.0,53.54 230.0,51.71 226.0,49.84 222.0,47.96 218.0,46.09 214.0,44.26 210.0,42.51 206.0,40.86 202.0,39.34 198.0,37.97 194.0,36.76 190.0,35.76 186.0,34.95 182.0,34.37 178.0,34.02 174.0,33.90 170.0,34.02 166.0,34.37 162.0,34.95 158.0,35.76 154.0,36.76 150.0,37.97 146.0,39.34 142.0,40.86 138.0,42.51 134.0,44.26 130.0,46.09 126.0,47.96 122.0,49.84 118.0,51.71 114.0,53.54 110.0,55.29 106.0,56.94 102.0,58.46 98.0,59.83 94.0,61.04 90.0,62.04 86.0,62.85 82.0,63.43 78.0,63.78 74.0,63.90 70.0,63.78 66.0,63.43 62.0,62.85 58.0,62.04 54.0,61.04 50.0,59.83 46.0,58.46 42.0,56.94 38.0,55.29 34.0,53.54 30.0,51.71 26.0,49.84" fill="#000"/><g font-size="25.388" font-weight="700" fill="#fff" stroke="#fff" stroke-width="0.550" clip-path="url(#bandclip)" aria-label="KEEP LEARNING KEEP LEARNING KEEP LEARNING KEEP LEARNING"><title>KEEP LEARNING KEEP LEARNING KEEP LEARNING KEEP LEARNING</title><text transform="matrix(0.95 0.4274 0 1.462 24.90 48.69)">K</text><text transform="matrix(0.95 0.2755 0 1.462 44.86 57.64)">E</text><text transform="matrix(0.95 0.0348 0 1.462 63.48 62.81)">E</text><text transform="matrix(0.95 -0.2175 0 1.462 82.11 63.10)">P</text> <text transform="matrix(0.95 -0.4379 0 1.462 109.97 54.66)">L</text><text transform="matrix(0.95 -0.4198 0 1.462 127.24 46.50)">E</text><text transform="matrix(0.95 -0.2565 0 1.462 145.87 38.21)">A</text><text transform="matrix(0.95 0.0075 0 1.462 165.83 33.08)">R</text><text transform="matrix(0.95 0.2687 0 1.462 185.78 33.69)">N</text><text transform="matrix(0.95 0.3994 0 1.462 205.74 39.97)">I</text><text transform="matrix(0.95 0.4477 0 1.462 214.98 43.90)">N</text><text transform="matrix(0.95 0.3596 0 1.462 234.93 53.54)">G</text> <text transform="matrix(0.95 -0.0025 0 1.462 265.47 63.17)">K</text><text transform="matrix(0.95 -0.2571 0 1.462 285.43 62.61)">E</text><text transform="matrix(0.95 -0.4167 0 1.462 304.05 57.16)">E</text><text transform="matrix(0.95 -0.4377 0 1.462 322.68 48.71)">P</text> <text transform="matrix(0.95 -0.2168 0 1.462 350.54 36.71)">L</text><text transform="matrix(0.95 0.0261 0 1.462 367.81 32.95)">E</text><text transform="matrix(0.95 0.2760 0 1.462 386.44 33.81)">A</text><text transform="matrix(0.95 0.4303 0 1.462 406.40 40.07)">R</text><text transform="matrix(0.95 0.4209 0 1.462 426.35 49.40)">N</text><text transform="matrix(0.95 0.3099 0 1.462 446.31 57.88)">I</text><text transform="matrix(0.95 0.1349 0 1.462 455.55 61.22)">N</text><text transform="matrix(0.95 -0.1501 0 1.462 475.50 63.76)">G</text> <text transform="matrix(0.95 -0.4289 0 1.462 506.04 56.38)">K</text><text transform="matrix(0.95 -0.4256 0 1.462 526.00 47.10)">E</text><text transform="matrix(0.95 -0.2781 0 1.462 544.62 38.75)">E</text><text transform="matrix(0.95 -0.0380 0 1.462 563.25 33.53)">P</text> <text transform="matrix(0.95 0.3113 0 1.462 591.11 34.96)">L</text><text transform="matrix(0.95 0.4351 0 1.462 608.39 40.93)">E</text><text transform="matrix(0.95 0.4177 0 1.462 627.01 49.72)">A</text><text transform="matrix(0.95 0.2437 0 1.462 646.97 58.50)">R</text><text transform="matrix(0.95 -0.0229 0 1.462 666.92 63.34)">N</text><text transform="matrix(0.95 -0.2185 0 1.462 686.88 62.01)">I</text><text transform="matrix(0.95 -0.3689 0 1.462 696.12 60.03)">N</text><text transform="matrix(0.95 -0.4472 0 1.462 716.08 51.88)">G</text> <text transform="matrix(0.95 -0.2479 0 1.462 746.61 37.93)">K</text><text transform="matrix(0.95 0.0086 0 1.462 766.57 33.08)">E</text><text transform="matrix(0.95 0.2544 0 1.462 785.19 33.65)">E</text><text transform="matrix(0.95 0.4155 0 1.462 803.82 39.05)">P</text> <text transform="matrix(0.95 0.3986 0 1.462 831.69 51.89)">L</text><text transform="matrix(0.95 0.2279 0 1.462 848.96 59.13)">E</text><text transform="matrix(0.95 -0.0322 0 1.462 867.58 63.41)">A</text><text transform="matrix(0.95 -0.2880 0 1.462 887.54 62.27)">R</text><text transform="matrix(0.95 -0.4343 0 1.462 907.49 55.77)">N</text><text transform="matrix(0.95 -0.4375 0 1.462 927.45 46.51)">I</text><text transform="matrix(0.95 -0.3503 0 1.462 936.69 42.02)">N</text><text transform="matrix(0.95 -0.1110 0 1.462 956.65 34.71)">G</text></g><g fill="none" stroke="#5e5e5e" stroke-width="1.500"><rect x="50.500" y="3.500" width="900" height="88.300"/><rect x="100.500" y="8.400" width="800" height="78.300"/><path d="M488 46.500h25M500.500 40v19M50.500 46.500h26M950.500 46.500h-26M500.500 3.500v3.500M500.500 91.800v-3.500"/></g><rect x="23.4" y="-0.6" width="7.700" height="7.700" fill="#b7a683" stroke="#8f8164" stroke-width="0.800"/><rect x="23.4" y="31.4" width="7.700" height="7.700" fill="#b7a683" stroke="#8f8164" stroke-width="0.800"/><rect x="23.4" y="62.699999999999996" width="7.700" height="7.700" fill="#b7a683" stroke="#8f8164" stroke-width="0.800"/><rect x="497.4" y="-0.6" width="7.700" height="7.700" fill="#b7a683" stroke="#8f8164" stroke-width="0.800"/><rect x="497.4" y="62.699999999999996" width="7.700" height="7.700" fill="#b7a683" stroke="#8f8164" stroke-width="0.800"/><rect x="971.4" y="-0.6" width="7.700" height="7.700" fill="#b7a683" stroke="#8f8164" stroke-width="0.800"/><rect x="971.4" y="31.4" width="7.700" height="7.700" fill="#b7a683" stroke="#8f8164" stroke-width="0.800"/><rect x="971.4" y="62.699999999999996" width="7.700" height="7.700" fill="#b7a683" stroke="#8f8164" stroke-width="0.800"/><g stroke="#a9a9a9" fill="none"><circle cx="500.500" cy="33.900" r="4.200" fill="#111" stroke-width="1.700"/><path d="M500.500 26.900v3M500.500 37.900v5M493.500 33.900h3M504.500 33.900h3" stroke-width="1.200"/></g><circle cx="500.500" cy="33.900" r="1.100" fill="#ddd"/></svg>
<div style="left:325px;top:827px;width:1419px;height:1px;background:#000;"></div>
<svg style="left:325px;top:828px;" width="760" height="22" viewBox="0 0 760 22"><rect x="6.500" y="4.500" width="9" height="7" fill="none" stroke="#bdbdbd" stroke-width="1.200"/><rect x="9" y="7" width="9.500" height="7.500" fill="#232323" stroke="#bdbdbd" stroke-width="1.200"/><path d="M12.300 8.800l3.200 1.900-3.200 1.900z" fill="#bdbdbd"/><rect x="28.500" y="4.500" width="11.500" height="8" fill="none" stroke="#bdbdbd" stroke-width="1.300"/><path d="M31 15.300h6.500M34.300 12.500v2.500" stroke="#bdbdbd" stroke-width="1.300"/><rect x="120" y="4.500" width="12" height="8.500" fill="none" stroke="#bdbdbd" stroke-width="1.300"/><path d="M126 3v11.500M118 8.700h16" stroke="#bdbdbd" stroke-width="1"/><path d="M128 15l2.200 2.400 2.200-2.400z" fill="#bdbdbd"/><path d="M143.500 16.500v-6l5-6h8v12z" fill="none" stroke="#bdbdbd" stroke-width="1.300"/><rect x="142" y="15" width="3" height="3" fill="#bdbdbd"/><rect x="155" y="15" width="3" height="3" fill="#bdbdbd"/><rect x="155" y="3" width="3" height="3" fill="#bdbdbd"/><path d="M233.500 7h3l1.200-1.800h4.600l1.200 1.800h3v9h-13z" fill="#bdbdbd"/><circle cx="240" cy="11.300" r="2.600" fill="#232323"/><circle cx="240" cy="11.300" r="1.300" fill="#bdbdbd"/><ellipse cx="262.500" cy="12" rx="6.500" ry="3.800" fill="none" stroke="#444" stroke-width="1.400"/><circle cx="262.500" cy="12" r="1.800" fill="#444"/><path d="M263 6.500a4 3 0 0 1 7 0.500" stroke="#444" stroke-width="1.300" fill="none"/><circle cx="284.500" cy="8.300" r="3.500" fill="#e02626"/><circle cx="281.600" cy="12.800" r="3.500" fill="#23b23a"/><circle cx="287.400" cy="12.800" r="3.500" fill="#2b62e0"/><path d="M286.500 15.300l2.300 2.500 2.300-2.500z" fill="#d0d0d0"/><rect x="386.500" y="5.500" width="13" height="11" fill="none" stroke="#bdbdbd" stroke-width="1.300"/><rect x="389.500" y="8.500" width="7" height="5" fill="#bdbdbd"/><rect x="408" y="4.500" width="15" height="13" fill="#244a86" stroke="#3b82e6" stroke-width="1"/><path d="M409 5.500h4.300v4h-4.300zM417.600 5.500h4.400v4h-4.400zM413.300 9.500h4.300v4h-4.300zM409 13.500h4.300v3.500h-4.300zM417.600 13.500h4.400v3.500h-4.400z" fill="#14233d"/><path d="M609 7h12.500M609 7l2.600-2.200M609 7l2.600 2.200M621.500 7l-2.600-2.200M621.500 7l-2.600 2.200" stroke="#bdbdbd" stroke-width="1.300" fill="none"/><rect x="611.500" y="10.500" width="8" height="6" fill="none" stroke="#bdbdbd" stroke-width="1.300"/><rect x="630.500" y="4.500" width="13" height="12" fill="none" stroke="#bdbdbd" stroke-width="1.300"/><path d="M638.500 6.500l-3.500 4.500h2.800l-1.300 3.500 3.800-4.800h-2.800z" fill="#bdbdbd"/><path d="M641 15.200l2 2.200 2-2.200z" fill="#bdbdbd"/><path d="M653 8v8h13v-8M656.500 16v-5M662.500 16v-5" stroke="#bdbdbd" stroke-width="1.300" fill="none"/><rect x="657.300" y="4" width="4.400" height="4" fill="#bdbdbd"/><rect x="678" y="4" width="5" height="4.500" fill="#bdbdbd"/><rect x="674" y="12.500" width="5" height="4.500" fill="#bdbdbd"/><rect x="682" y="12.500" width="5" height="4.500" fill="#bdbdbd"/><path d="M680.500 8.500v2h-4v2M680.500 10.500h4v2" stroke="#bdbdbd" stroke-width="1.200" fill="none"/><rect x="692" y="3" width="1" height="17" fill="#303030"/><circle cx="704.500" cy="11" r="5.600" fill="none" stroke="#bdbdbd" stroke-width="2.600"/><path d="M704.500 4.500l2 5M710.500 9l-5 2.500M708.500 16l-3.500-4M700.500 16.500l2.500-5M698.500 9.500l5 1.500" stroke="#232323" stroke-width="1.200"/></svg>
<div style="left:371.5px;top:829.5px;width:67.0px;height:19px;background:#1f1f1f;border:1px solid #2a2a2a;"></div>
<span class="t" style="left:376.5px;top:831px;height:17px;line-height:17px;font-size:12px;color:#c6c6c6;letter-spacing:-1.02px;">25%</span>
<svg style="left:426.5px;top:836.5px;" width="8" height="6" viewBox="0 0 8 6"><path d="M0.700 0.900l3.3 3.600 3.3-3.600" stroke="#c4c4c4" stroke-width="1.150" fill="none"/></svg>
<span class="t" style="left:504px;top:831.5px;height:16px;line-height:16px;font-size:11.5px;color:#848484;letter-spacing:-0.37px;">00000</span>
<div style="left:621.5px;top:829.5px;width:82.5px;height:19px;background:#1f1f1f;border:1px solid #2a2a2a;"></div>
<span class="t" style="left:628.5px;top:830.5px;height:18px;line-height:18px;font-size:12.5px;color:#c6c6c6;letter-spacing:0.83px;">二分之一</span>
<svg style="left:692.5px;top:836.5px;" width="8" height="6" viewBox="0 0 8 6"><path d="M0.700 0.900l3.3 3.600 3.3-3.600" stroke="#c4c4c4" stroke-width="1.150" fill="none"/></svg>
<div style="left:752px;top:829.5px;width:103px;height:19px;background:#1f1f1f;border:1px solid #2a2a2a;"></div>
<span class="t" style="left:758.5px;top:830.5px;height:18px;line-height:18px;font-size:12.5px;color:#c6c6c6;letter-spacing:1.12px;">活动摄像机</span>
<svg style="left:842.5px;top:836.5px;" width="8" height="6" viewBox="0 0 8 6"><path d="M0.700 0.900l3.3 3.600 3.3-3.600" stroke="#c4c4c4" stroke-width="1.150" fill="none"/></svg>
<div style="left:860px;top:829.5px;width:67px;height:19px;background:#1f1f1f;border:1px solid #2a2a2a;"></div>
<span class="t" style="left:865px;top:831px;height:17px;line-height:17px;font-size:12px;color:#c6c6c6;letter-spacing:-0.17px;">1个...</span>
<svg style="left:914px;top:836.5px;" width="8" height="6" viewBox="0 0 8 6"><path d="M0.700 0.900l3.3 3.600 3.3-3.600" stroke="#c4c4c4" stroke-width="1.150" fill="none"/></svg>
<span class="t" style="left:1042px;top:831.5px;height:16px;line-height:16px;font-size:11.5px;color:#2a6cc0;letter-spacing:-0.23px;">+0.0</span>
<span class="t" style="left:1759.5px;top:77.5px;height:17px;line-height:17px;font-size:11.8px;color:#c8c8c8;letter-spacing:-0.18px;">Motion 2</span>
<svg style="left:1813.5px;top:82.5px;" width="10" height="9" viewBox="0 0 10 9"><path d="M0.500 1h8.500M0.500 4.500h8.500M0.500 8h8.500" stroke="#c4c4c4" stroke-width="1.200"/></svg>
<div style="left:1758px;top:96px;width:65px;height:2px;background:#cfcfcf;"></div>
<span class="t" style="left:1845.5px;top:78.5px;height:15px;line-height:15px;font-size:10.5px;color:#8f8f8f;letter-spacing:-0.52px;">AE</span>
<span class="t" style="left:1860px;top:76.5px;height:18px;line-height:18px;font-size:13px;color:#8f8f8f;letter-spacing:0.37px;">脚本管理器</span>
<span class="t" style="left:1967.5px;top:78px;height:16px;line-height:16px;font-size:11.5px;color:#858585;letter-spacing:-0.48px;">Duik Bassel.1</span>
<div style="left:1748px;top:100px;width:601px;height:1px;background:#2b2b2b;"></div>
<div style="left:1749px;top:100px;width:1px;height:748px;background:#2a2a2a;"></div>
<div style="left:2347px;top:100px;width:1.5px;height:748px;background:#2f2f2f;"></div>
<div style="left:1749px;top:847.5px;width:599px;height:1px;background:#2a2a2a;"></div>
<div style="left:1751px;top:103px;width:131.5px;height:22.5px;background:#1d1d1d;border:1px solid #2e2e2e;border-radius:2px;"></div>
<span class="t" style="left:1757.5px;top:105.8px;height:17px;line-height:17px;font-size:11.8px;color:#cfcfcf;letter-spacing:-0.02px;">Motion v2</span>
<svg style="left:1870px;top:111.5px;" width="9" height="6" viewBox="0 0 9 6"><path d="M0.700 0.900l3.8 3.600 3.8-3.600" stroke="#bdbdbd" stroke-width="1.150" fill="none"/></svg>
<svg style="left:1906px;top:107px;" width="40" height="15" viewBox="0 0 40 15"><path d="M1 13.500L11.500 2l7 7.500L21.500 6.500l3.500 3.500 4-4 8 7.500z" fill="#9a9a9a"/><path d="M17.500 13.500l6.500-6.500 3.500 3.500 4-3.500 7 6.500z" fill="#d8d8d8"/></svg>
<svg style="left:1755px;top:143.3px;" width="90" height="16" viewBox="0 0 90 16"><path d="M17 8h70" stroke="#474747" stroke-width="1.600"/><circle cx="8" cy="8" r="5.800" fill="none" stroke="#b2b2b2" stroke-width="1.900"/></svg>
<svg style="left:1755px;top:169px;" width="90" height="16" viewBox="0 0 90 16"><path d="M17 8h70" stroke="#474747" stroke-width="1.600"/><circle cx="8" cy="8" r="5.800" fill="none" stroke="#b2b2b2" stroke-width="1.900"/></svg>
<svg style="left:1755px;top:195px;" width="90" height="16" viewBox="0 0 90 16"><path d="M17 8h70" stroke="#474747" stroke-width="1.600"/><circle cx="8" cy="8" r="5.800" fill="none" stroke="#b2b2b2" stroke-width="1.900"/></svg>
<svg style="left:1854.5px;top:141.5px;" width="75" height="75" viewBox="0 0 75 75"><g transform="translate(0.0 0.0)"><rect x="0.500" y="0.500" width="17.500" height="17.500" fill="#1b1b1b" stroke="#101010" stroke-width="1"/><rect x="1.700" y="1.700" width="15.100" height="15.100" fill="none" stroke="#3c3c3c" stroke-width="1"/><path d="M6.500 12.500v-6h6" stroke="#dedede" stroke-width="1.800" fill="none"/></g><g transform="translate(26.2 0.0)"><rect x="0.500" y="0.500" width="17.500" height="17.500" fill="#1b1b1b" stroke="#101010" stroke-width="1"/><rect x="1.700" y="1.700" width="15.100" height="15.100" fill="none" stroke="#3c3c3c" stroke-width="1"/><path d="M9.250 6.500v5.500" stroke="#dedede" stroke-width="1.800" fill="none"/></g><g transform="translate(52.4 0.0)"><rect x="0.500" y="0.500" width="17.500" height="17.500" fill="#1b1b1b" stroke="#101010" stroke-width="1"/><rect x="1.700" y="1.700" width="15.100" height="15.100" fill="none" stroke="#3c3c3c" stroke-width="1"/><path d="M6 6.500h6v6" stroke="#dedede" stroke-width="1.800" fill="none"/></g><g transform="translate(0.0 26.1)"><rect x="0.500" y="0.500" width="17.500" height="17.500" fill="#1b1b1b" stroke="#101010" stroke-width="1"/><rect x="1.700" y="1.700" width="15.100" height="15.100" fill="none" stroke="#3c3c3c" stroke-width="1"/><path d="M6.500 9.250h5.500" stroke="#dedede" stroke-width="1.800" fill="none"/></g><g transform="translate(26.2 26.1)"><rect x="0.500" y="0.500" width="17.500" height="17.500" fill="#1b1b1b" stroke="#101010" stroke-width="1"/><rect x="1.700" y="1.700" width="15.100" height="15.100" fill="none" stroke="#3c3c3c" stroke-width="1"/><rect x="6.400" y="6.400" width="5.700" height="5.700" fill="none" stroke="#dedede" stroke-width="1.700"/></g><g transform="translate(52.4 26.1)"><rect x="0.500" y="0.500" width="17.500" height="17.500" fill="#1b1b1b" stroke="#101010" stroke-width="1"/><rect x="1.700" y="1.700" width="15.100" height="15.100" fill="none" stroke="#3c3c3c" stroke-width="1"/><path d="M6.500 9.250h5.500" stroke="#dedede" stroke-width="1.800" fill="none"/></g><g transform="translate(0.0 52.2)"><rect x="0.500" y="0.500" width="17.500" height="17.500" fill="#1b1b1b" stroke="#101010" stroke-width="1"/><rect x="1.700" y="1.700" width="15.100" height="15.100" fill="none" stroke="#3c3c3c" stroke-width="1"/><path d="M6.500 6v6h6" stroke="#dedede" stroke-width="1.800" fill="none"/></g><g transform="translate(26.2 52.2)"><rect x="0.500" y="0.500" width="17.500" height="17.500" fill="#1b1b1b" stroke="#101010" stroke-width="1"/><rect x="1.700" y="1.700" width="15.100" height="15.100" fill="none" stroke="#3c3c3c" stroke-width="1"/><path d="M9.250 6.500v5.500" stroke="#dedede" stroke-width="1.800" fill="none"/></g><g transform="translate(52.4 52.2)"><rect x="0.500" y="0.500" width="17.500" height="17.500" fill="#1b1b1b" stroke="#101010" stroke-width="1"/><rect x="1.700" y="1.700" width="15.100" height="15.100" fill="none" stroke="#3c3c3c" stroke-width="1"/><path d="M12 6v6h-6" stroke="#dedede" stroke-width="1.800" fill="none"/></g></svg>
<svg style="left:1934px;top:147px;" width="18" height="58" viewBox="0 0 18 58"><path d="M9 2.500c2.200 1.800 3 4.500 3 7.500v6l2.200 2.500v2h-10.400v-2l2.200-2.500v-6c0-3 0.800-5.700 3-7.500z" fill="#5a5a5a" stroke="#777" stroke-width="0.800"/><path d="M6.500 20.500h5" stroke="#8a6a5a" stroke-width="1.200"/><path d="M6.500 36v-11M4 27.500l2.500-3 2.500 3M11.500 25v11M9 33.500l2.500 3 2.500-3" stroke="#43b4e6" stroke-width="1.500" fill="none"/><circle cx="9" cy="42.200" r="1.500" fill="none" stroke="#e0e0e0" stroke-width="1.200"/><path d="M9 43.700v11M6 46.500h6M3.500 50c0.500 3 2.500 4.800 5.500 4.800s5-1.800 5.500-4.800M2.500 51.500l1-2.500 2 1.500M15.500 51.500l-1-2.500-2 1.500" stroke="#e0e0e0" stroke-width="1.400" fill="none"/></svg>
<svg style="left:1756px;top:226px;" width="20" height="18" viewBox="0 0 20 18"><path d="M8 2.500v13M1.500 9h13" stroke="#dedede" fill="none" stroke-width="2"/></svg>
<span class="t" style="left:1775.3px;top:229.3px;height:12px;line-height:12px;font-size:8.6px;color:#dedede;font-weight:700;letter-spacing:0.59px;">EXCITE</span>
<svg style="left:1756px;top:252px;" width="20" height="18" viewBox="0 0 20 18"><path d="M2 15.500v-4.500c0-1.500 0.800-2.300 1.800-2.600-0.800-0.600-1.200-1.400-1.200-2.400 0-1.700 1.100-2.800 2.600-2.800s2.600 1.100 2.600 2.800c0 1-0.400 1.800-1.200 2.400 1 0.300 1.800 1.100 1.800 2.600v4.500z" fill="#dedede"/><path d="M8.300 4.500c0.300-1 1.200-1.700 2.300-1.700 1.500 0 2.600 1.100 2.600 2.800 0 1-0.400 1.800-1.200 2.400 1 0.300 1.800 1.100 1.800 2.600v3.500h-3.500v-3.300c0-1.200-0.400-2.100-1.100-2.700 0.300-0.600 0.500-1.200 0.500-1.900 0-0.600-0.100-1.200-0.400-1.700z" fill="#dedede"/></svg>
<span class="t" style="left:1775.3px;top:255.3px;height:12px;line-height:12px;font-size:8.6px;color:#dedede;font-weight:700;letter-spacing:0.28px;">CLONE</span>
<svg style="left:1756px;top:278px;" width="20" height="18" viewBox="0 0 20 18"><path d="M2 6.500v-3.500h3.500M10.500 3h3.500v3.500M14 11.500v3.500h-3.500M5.500 15h-3.500v-3.500" stroke="#dedede" fill="none" stroke-width="1.500"/><rect x="7" y="8" width="2" height="2" fill="#dedede"/></svg>
<span class="t" style="left:1775.3px;top:281.3px;height:12px;line-height:12px;font-size:8.6px;color:#dedede;font-weight:700;letter-spacing:0.33px;">NULL</span>
<svg style="left:1756px;top:304px;" width="20" height="18" viewBox="0 0 20 18"><rect x="7.500" y="2" width="8" height="7.500" fill="#dedede"/><path d="M5 5.500v7h7M2 9.500v6h6" stroke="#dedede" fill="none" stroke-width="1.500"/></svg>
<span class="t" style="left:1775.3px;top:307.3px;height:12px;line-height:12px;font-size:8.6px;color:#dedede;font-weight:700;letter-spacing:0.14px;">WARP</span>
<svg style="left:1828.5px;top:226px;" width="20" height="18" viewBox="0 0 20 18"><path d="M8.500 1v7M5.500 5.500l3 3 3-3" stroke="#dedede" fill="none" stroke-width="1.600"/><path d="M1.500 8c1 3 4 4.500 7 4.500s6-1.500 7-4.500M4.500 8.500c0.800 1.500 2.300 2.200 4 2.200s3.200-0.700 4-2.200M1 15h15" stroke="#dedede" fill="none" stroke-width="1.300"/></svg>
<span class="t" style="left:1848.5px;top:229.3px;height:12px;line-height:12px;font-size:8.6px;color:#dedede;font-weight:700;letter-spacing:0.10px;">BLEND</span>
<svg style="left:1828.5px;top:252px;" width="20" height="18" viewBox="0 0 20 18"><path d="M1 3h2.500l4 6.500 4-5" stroke="#dedede" fill="none" stroke-width="1.400"/><rect x="12.500" y="2.500" width="3" height="3" fill="#dedede"/><path d="M1 14h15.500" stroke="#dedede" fill="none" stroke-width="2"/></svg>
<span class="t" style="left:1848.5px;top:255.3px;height:12px;line-height:12px;font-size:8.6px;color:#dedede;font-weight:700;letter-spacing:0.37px;">JUMP</span>
<svg style="left:1828.5px;top:278px;" width="20" height="18" viewBox="0 0 20 18"><path d="M12.500 4.500a6 6 0 1 0 1.800 6" stroke="#dedede" fill="none" stroke-width="1.400"/><path d="M9 6.300l2.700 2.700-2.700 2.700-2.700-2.700z" fill="#dedede"/><rect x="8" y="15" width="2.200" height="2.200" fill="#dedede"/><path d="M11.500 2.300a7 7 0 0 1 3.700 5" stroke="#dedede" fill="none" stroke-width="1.200"/></svg>
<span class="t" style="left:1848.5px;top:281.3px;height:12px;line-height:12px;font-size:8.6px;color:#dedede;font-weight:700;letter-spacing:0.19px;">ORBIT</span>
<svg style="left:1828.5px;top:304px;" width="20" height="18" viewBox="0 0 20 18"><path d="M13.800 8a6 6 0 1 1-4.300-4.600" stroke="#dedede" fill="none" stroke-width="1.500"/><path d="M8.500 1l3 2.700-3 2.700" stroke="#dedede" fill="none" stroke-width="1.500"/></svg>
<span class="t" style="left:1848.5px;top:307.3px;height:12px;line-height:12px;font-size:8.6px;color:#dedede;font-weight:700;letter-spacing:0.41px;">SPIN</span>
<svg style="left:1897.5px;top:226px;" width="20" height="18" viewBox="0 0 20 18"><path d="M9 1.500v4M9 12.500v4M1.500 9h4M12.500 9h4M3.700 3.700l2.800 2.800M11.500 11.500l2.800 2.800M14.300 3.700l-2.800 2.800M6.500 11.500l-2.800 2.800" stroke="#dedede" fill="none" stroke-width="1.700"/></svg>
<span class="t" style="left:1918.5px;top:229.3px;height:12px;line-height:12px;font-size:8.6px;color:#dedede;font-weight:700;letter-spacing:0.05px;">BURST</span>
<svg style="left:1897.5px;top:252px;" width="20" height="18" viewBox="0 0 20 18"><path d="M3 12.500l9-9.500 3.500 3-9 9.500-4.300 1.300z" stroke="#dedede" fill="none" stroke-width="1.400"/><path d="M10.500 4.500l3.500 3M3.500 12.500l3 3" stroke="#dedede" fill="none" stroke-width="1.200"/></svg>
<span class="t" style="left:1918.5px;top:255.3px;height:12px;line-height:12px;font-size:8.6px;color:#dedede;font-weight:700;letter-spacing:0.33px;">NAME</span>
<svg style="left:1897.5px;top:278px;" width="20" height="18" viewBox="0 0 20 18"><rect x="2" y="11.500" width="4.500" height="4.500" stroke="#dedede" fill="none" stroke-width="1.300"/><rect x="12" y="2" width="4" height="4" stroke="#dedede" fill="none" stroke-width="1.300"/><path d="M5.500 12.500l7.500-7.500M10 4.500h3.500v3.500" stroke="#dedede" fill="none" stroke-width="1.300"/></svg>
<span class="t" style="left:1918.5px;top:281.3px;height:12px;line-height:12px;font-size:8.6px;color:#dedede;font-weight:700;letter-spacing:0.21px;">ROPE</span>
<svg style="left:1897.5px;top:304px;" width="20" height="18" viewBox="0 0 20 18"><path d="M1.500 9c2-3.300 4.500-5 7.500-5s5.500 1.700 7.500 5c-2 3.300-4.500 5-7.500 5s-5.500-1.700-7.500-5z" stroke="#dedede" fill="none" stroke-width="1.400"/><circle cx="9" cy="9" r="2.300" stroke="#dedede" fill="none" stroke-width="1.600"/></svg>
<span class="t" style="left:1918.5px;top:307.3px;height:12px;line-height:12px;font-size:8.6px;color:#dedede;font-weight:700;letter-spacing:0.20px;">STARE</span>
<div style="left:1751px;top:336px;width:134.5px;height:22px;background:#1d1d1d;border:1px solid #2e2e2e;border-radius:2px;"></div>
<span class="t" style="left:1757.5px;top:338.5px;height:17px;line-height:17px;font-size:11.8px;color:#cfcfcf;letter-spacing:-0.42px;">Task Launch</span>
<svg style="left:1873px;top:344.5px;" width="9" height="6" viewBox="0 0 9 6"><path d="M0.700 0.900l3.8 3.600 3.8-3.600" stroke="#bdbdbd" stroke-width="1.150" fill="none"/></svg>
<div style="left:1895px;top:336px;width:58.5px;height:22.5px;background:#1d1d1d;border:1px solid #0c0c0c;"></div>
<div style="left:1895.8px;top:336.8px;width:57px;height:21px;border:1px solid #727272;"></div>
<svg style="left:1917px;top:340px;" width="16" height="15" viewBox="0 0 16 15"><path d="M2 3.500h11.500M5.500 3.500v-1.500h4.500v1.500M3.500 3.500l0.800 10h7l0.800-10M6.300 5.500v6.500M7.750 5.500v6.500M9.200 5.500v6.500" stroke="#d8d8d8" stroke-width="1.200" fill="none"/></svg>
<span class="t" style="left:2394.5px;top:76.5px;height:18px;line-height:18px;font-size:13px;color:#8a8a8a;letter-spacing:-0.02px;">段落</span>
<span class="t" style="left:2463.5px;top:76.5px;height:18px;line-height:18px;font-size:13px;color:#c4c4c4;letter-spacing:-0.02px;">字符</span>
<svg style="left:2500.5px;top:82.5px;" width="10" height="9" viewBox="0 0 10 9"><path d="M0.500 1h8.500M0.500 4.500h8.500M0.500 8h8.500" stroke="#c4c4c4" stroke-width="1.200"/></svg>
<div style="left:2462px;top:96px;width:47.5px;height:2px;background:#cfcfcf;"></div>
<svg style="left:2544px;top:79px;" width="13" height="12" viewBox="0 0 13 12"><path d="M1.500 1.500l4 4.300-4 4.300M7 1.500l4 4.300-4 4.300" stroke="#c4c4c4" stroke-width="1.700" fill="none"/></svg>
<div style="left:2360px;top:108.5px;width:120.5px;height:17.5px;background:#161616;border:1px solid #2b2b2b;"></div>
<div style="left:2461.5px;top:109.5px;width:1px;height:15.5px;background:#2b2b2b;"></div>
<span class="t" style="left:2366px;top:109.2px;height:17px;line-height:17px;font-size:12px;color:#d2d2d2;">Arial</span>
<svg style="left:2466.5px;top:115.0px;" width="9" height="6" viewBox="0 0 9 6"><path d="M0.700 0.900l3.8 3.600 3.8-3.600" stroke="#bdbdbd" stroke-width="1.150" fill="none"/></svg>
<div style="left:2360px;top:133px;width:120.5px;height:17.5px;background:#161616;border:1px solid #2b2b2b;"></div>
<div style="left:2461.5px;top:134px;width:1px;height:15.5px;background:#2b2b2b;"></div>
<span class="t" style="left:2366px;top:133.7px;height:17px;line-height:17px;font-size:12px;color:#d2d2d2;">Bold</span>
<svg style="left:2466.5px;top:139.5px;" width="9" height="6" viewBox="0 0 9 6"><path d="M0.700 0.900l3.8 3.600 3.8-3.600" stroke="#bdbdbd" stroke-width="1.150" fill="none"/></svg>
<svg style="left:2485px;top:109px;" width="20" height="20" viewBox="0 0 20 20"><path d="M2.500 17.500c-0.800-0.800-0.300-1.800 0.500-2.600l8-8 2 2-8 8c-0.800 0.800-1.700 1.400-2.500 0.600z" fill="none" stroke="#bdbdbd" stroke-width="1.300"/><path d="M10 5.500l4.500 4.500M11.500 7l2.500-3.500c0.800-1.100 2.200-1.500 3.200-0.500s0.600 2.400-0.500 3.200l-3.500 2.500z" fill="#bdbdbd" stroke="#bdbdbd" stroke-width="1.200"/></svg>
<svg style="left:2509px;top:107px;" width="48" height="46" viewBox="0 0 48 46"><rect x="15" y="15" width="28.500" height="28" fill="#fff" stroke="#000" stroke-width="1.200"/><rect x="23.500" y="23.500" width="9.500" height="9.500" fill="#232323" stroke="#000" stroke-width="1.200"/><path d="M15.500 42.500L43 15.500" stroke="#d6202c" stroke-width="1.600"/><rect x="2" y="1.500" width="28.600" height="28.500" fill="#fff" stroke="#111" stroke-width="1"/><rect x="2.500" y="31.500" width="10" height="10.500" fill="#f4f4f4" stroke="#8a8a8a" stroke-width="0.800"/><path d="M3 41.500l9-9.500" stroke="#d6202c" stroke-width="1"/><path d="M34.500 4c3-2 6.500-0.500 7 4.500M39.500 7.500l2.300 3 2-3.300M36.800 2l-3.800 2.300 3.300 2.300" fill="none" stroke="#c8c8c8" stroke-width="1.400"/></svg>
<div style="left:2485px;top:133.5px;width:20px;height:16.5px;background:#fff;border:1px solid #9a9a9a;"></div>
<div style="left:2486px;top:134.5px;width:18px;height:7.3px;background:#000;"></div>
<div style="left:2358px;top:156px;width:195px;height:1px;background:#1a1a1a;"></div>
<div style="left:2358px;top:157px;width:195px;height:1px;background:#2a2a2a;"></div>
<svg style="left:2357px;top:160px;" width="22" height="18" viewBox="0 0 22 18"><text x="1" y="15.500" font-size="11" fill="#c8c8c8" style="font-family:'Liberation Serif',serif;font-weight:700">T</text><text x="6.500" y="15.500" font-size="19" fill="#c8c8c8" style="font-family:'Liberation Serif',serif;font-weight:700">T</text></svg>
<span class="t" style="left:2382.5px;top:162px;height:16px;line-height:16px;font-size:11.5px;color:#2f86e6;letter-spacing:-1.09px;">100</span>
<span class="t" style="left:2404px;top:161px;height:18px;line-height:18px;font-size:12.5px;color:#b2b2b2;letter-spacing:0.48px;">像素</span>
<svg style="left:2437.5px;top:167.0px;" width="8" height="7" viewBox="0 0 8 7"><path d="M0.500 0.500h6.500l-3.250 6z" fill="#b0b0b0"/></svg>
<svg style="left:2462px;top:161px;" width="20" height="20" viewBox="0 0 20 20"><text x="10.500" y="8.500" font-size="9.500" fill="#c8c8c8" text-anchor="middle">A</text><text x="10.500" y="17.800" font-size="9.500" fill="#c8c8c8" text-anchor="middle">A</text><path d="M6.500 9.200h8.500M6 18.500h9M3 9.500v8.500M1.200 11.500l1.800-2.300 1.800 2.300M1.200 16l1.800 2.300 1.800-2.300" stroke="#c8c8c8" stroke-width="1" fill="none"/></svg>
<span class="t" style="left:2488.5px;top:160.5px;height:18px;line-height:18px;font-size:12.5px;color:#2f86e6;letter-spacing:0.98px;">自动</span>
<svg style="left:2544.5px;top:167.0px;" width="8" height="7" viewBox="0 0 8 7"><path d="M0.500 0.500h6.500l-3.250 6z" fill="#b0b0b0"/></svg>
<svg style="left:2356px;top:181px;" width="24" height="20" viewBox="0 0 24 20"><text x="1" y="12.500" font-size="13" fill="#c8c8c8" letter-spacing="-2.500">V</text><path d="M7 14l5.500-13" stroke="#c8c8c8" stroke-width="1"/><text x="9.500" y="12.500" font-size="13" fill="#c8c8c8">A</text><path d="M8.500 17.500h8M11 15.500l-2.500 2 2.500 2" stroke="#c8c8c8" stroke-width="1.100" fill="none"/></svg>
<span class="t" style="left:2386px;top:180px;height:18px;line-height:18px;font-size:12.5px;color:#5c5c5c;letter-spacing:0.33px;">度量标准</span>
<svg style="left:2437.5px;top:186.5px;" width="8" height="7" viewBox="0 0 8 7"><path d="M0.500 0.500h6.500l-3.250 6z" fill="#b0b0b0"/></svg>
<svg style="left:2463px;top:181px;" width="22" height="20" viewBox="0 0 22 20"><rect x="1.500" y="1.500" width="18.500" height="10.500" fill="#c8c8c8"/><text x="10.800" y="11" font-size="10.500" font-weight="700" fill="#232323" text-anchor="middle" letter-spacing="-0.800">VA</text><path d="M2 16.500h17.500M4.500 14.500l-2.500 2 2.500 2M17 14.500l2.500 2-2.500 2" stroke="#c8c8c8" stroke-width="1.100" fill="none"/></svg>
<span class="t" style="left:2486px;top:181px;height:16px;line-height:16px;font-size:11.5px;color:#2f86e6;letter-spacing:-0.84px;">100</span>
<svg style="left:2544.5px;top:186.5px;" width="8" height="7" viewBox="0 0 8 7"><path d="M0.500 0.500h6.500l-3.250 6z" fill="#b0b0b0"/></svg>
<div style="left:2358px;top:206px;width:195px;height:1px;background:#1a1a1a;"></div>
<div style="left:2358px;top:207px;width:195px;height:1px;background:#2a2a2a;"></div>
<svg style="left:2359px;top:214px;" width="16" height="14" viewBox="0 0 16 14"><path d="M1 2h14" stroke="#c8c8c8" stroke-width="1.200"/><path d="M1 6.500h14" stroke="#c8c8c8" stroke-width="2"/><path d="M1 11.500h14" stroke="#c8c8c8" stroke-width="2.800"/></svg>
<span class="t" style="left:2384px;top:213px;height:16px;line-height:16px;font-size:11.5px;color:#2f86e6;">-</span>
<span class="t" style="left:2394px;top:212px;height:18px;line-height:18px;font-size:12.5px;color:#b2b2b2;letter-spacing:0.48px;">像素</span>
<svg style="left:2437.5px;top:218.0px;" width="8" height="7" viewBox="0 0 8 7"><path d="M0.500 0.500h6.500l-3.250 6z" fill="#b0b0b0"/></svg>
<div style="left:2448px;top:213px;width:105.5px;height:17.5px;background:#1c1c1c;border:1px solid #2c2c2c;"></div>
<svg style="left:2541px;top:219.5px;" width="9" height="6" viewBox="0 0 9 6"><path d="M0.700 0.900l3.8 3.600 3.8-3.600" stroke="#bdbdbd" stroke-width="1.150" fill="none"/></svg>
<div style="left:2358px;top:237px;width:195px;height:1px;background:#1a1a1a;"></div>
<div style="left:2358px;top:238px;width:195px;height:1px;background:#2a2a2a;"></div>
<svg style="left:2357px;top:242px;" width="22" height="20" viewBox="0 0 22 20"><text x="7" y="16" font-size="19" fill="#c8c8c8" style="font-family:'Liberation Serif',serif;font-weight:700">T</text><path d="M3.500 3v13.500M1.500 5.500l2-2.700 2 2.700M1.500 14l2 2.700 2-2.700" stroke="#c8c8c8" stroke-width="1.100" fill="none"/></svg>
<span class="t" style="left:2382.5px;top:243px;height:16px;line-height:16px;font-size:11.5px;color:#2f86e6;letter-spacing:-1.09px;">150</span>
<span class="t" style="left:2403px;top:243.5px;height:16px;line-height:16px;font-size:11.5px;color:#b2b2b2;">%</span>
<svg style="left:2437.5px;top:248.5px;" width="8" height="7" viewBox="0 0 8 7"><path d="M0.500 0.500h6.500l-3.250 6z" fill="#b0b0b0"/></svg>
<svg style="left:2462px;top:243px;" width="22" height="22" viewBox="0 0 22 22"><text x="10.500" y="14" font-size="18" fill="#c8c8c8" text-anchor="middle" style="font-family:'Liberation Serif',serif;font-weight:700">T</text><path d="M2 18.500h17M4.500 16.500l-2.500 2 2.500 2M16.500 16.500l2.500 2-2.500 2" stroke="#c8c8c8" stroke-width="1.100" fill="none"/></svg>
<span class="t" style="left:2487px;top:244px;height:16px;line-height:16px;font-size:11.5px;color:#2f86e6;letter-spacing:-1.30px;">95</span>
<span class="t" style="left:2502.5px;top:244.5px;height:16px;line-height:16px;font-size:11.5px;color:#b2b2b2;">%</span>
<svg style="left:2544.5px;top:249.0px;" width="8" height="7" viewBox="0 0 8 7"><path d="M0.500 0.500h6.500l-3.250 6z" fill="#b0b0b0"/></svg>
<svg style="left:2357px;top:265px;" width="20" height="20" viewBox="0 0 20 20"><text x="0.500" y="12" font-size="13" fill="#c8c8c8">A</text><text x="9.500" y="9" font-size="8" fill="#c8c8c8">a</text><path d="M1 14.500h8.500M9.500 10.500h5M12 18.500v-5.500M10.300 15l1.700-2 1.700 2" stroke="#c8c8c8" stroke-width="1" fill="none"/></svg>
<span class="t" style="left:2383px;top:265px;height:16px;line-height:16px;font-size:11.5px;color:#2f86e6;">0</span>
<span class="t" style="left:2394px;top:264px;height:18px;line-height:18px;font-size:12.5px;color:#b2b2b2;letter-spacing:0.48px;">像素</span>
<svg style="left:2437.5px;top:270.0px;" width="8" height="7" viewBox="0 0 8 7"><path d="M0.500 0.500h6.500l-3.250 6z" fill="#b0b0b0"/></svg>
<svg style="left:2463px;top:265px;" width="22" height="22" viewBox="0 0 22 22"><text x="10.500" y="10.500" font-size="10" fill="#c8c8c8" text-anchor="middle" style="font-family:'Noto Sans CJK JP',sans-serif">あ</text><path d="M3.500 1.500v11M17.500 1.500v11" stroke="#9a9a9a" stroke-width="0.900" stroke-dasharray="1.200 1"/><path d="M1 16.500h6M5 14.800l2 1.700-2 1.700M20 16.500h-6M16 14.800l-2 1.700 2 1.700" stroke="#c8c8c8" stroke-width="1" fill="none"/></svg>
<span class="t" style="left:2487px;top:264.5px;height:16px;line-height:16px;font-size:11.5px;color:#2f86e6;">0</span>
<span class="t" style="left:2498px;top:265px;height:16px;line-height:16px;font-size:11.5px;color:#b2b2b2;">%</span>
<svg style="left:2544.5px;top:270.0px;" width="8" height="7" viewBox="0 0 8 7"><path d="M0.500 0.500h6.500l-3.250 6z" fill="#b0b0b0"/></svg>
<div style="left:2358px;top:289.5px;width:195px;height:1px;background:#1a1a1a;"></div>
<div style="left:2358px;top:290.5px;width:195px;height:1px;background:#2a2a2a;"></div>
<svg style="left:2380px;top:295px;" width="160" height="20" viewBox="0 0 160 20"><g fill="#cdcdcd" style="font-family:'Liberation Serif',serif;font-weight:700"><text x="4" y="15.500" font-size="17" stroke="#cdcdcd" stroke-width="0.700">T</text><text x="28" y="15.500" font-size="17" font-style="italic">T</text><text x="54" y="15.500" font-size="17">T</text><text x="65.500" y="15.500" font-size="17">T</text><text x="80.500" y="15.500" font-size="17">T</text><text x="91" y="15.500" font-size="12.500">T</text><text x="113" y="15.500" font-size="17">T</text><text x="124" y="9" font-size="7">1</text><text x="138" y="15.500" font-size="17">T</text><text x="149" y="18" font-size="7">1</text></g></svg>
<div style="left:2364.5px;top:325px;width:13px;height:13.5px;border:1.600px solid #9e9e9e;border-radius:2px;"></div>
<div style="left:2462.5px;top:325px;width:13px;height:13.5px;border:1.600px solid #9e9e9e;border-radius:2px;"></div>
<span class="t" style="left:2383px;top:322.5px;height:18px;line-height:18px;font-size:13px;color:#b2b2b2;letter-spacing:-0.52px;">连字</span>
<span class="t" style="left:2481px;top:322.5px;height:18px;line-height:18px;font-size:13px;color:#b2b2b2;letter-spacing:0.12px;">印地语数字</span>
<svg style="left:2508px;top:583px;" width="52" height="54" viewBox="0 0 52 54"><circle cx="27" cy="27" r="23" fill="#fdfdfd" stroke="#2d72d8" stroke-width="2.600"/><circle cx="27" cy="27" r="21.400" fill="none" stroke="#dfeaff" stroke-width="1"/><circle cx="27" cy="27" r="20" fill="none" stroke="#2a2a3a" stroke-width="0.600"/><path d="M27 33.500c-2.200 0-3.400-2.500-3.800-5.500-0.300-2 0.300-3.200 1.500-3.800-1.300-0.500-2.300-1.500-2.800-2.800-1.300-0.200-2.700-0.900-3.700-2.200l-1.700 0.200 1.200-0.900c-0.700-1.200-1-2.600-0.800-4l0.900 0.100c0 1.300 0.400 2.500 1.200 3.500l0.300-2.700 0.900 0.200-0.200 3.300c0.700 0.600 1.500 1 2.400 1.100l-0.100-2.300 0.900 0.100 0.300 2.800c0.500 1 1.400 1.700 2.500 2 0.600-0.200 1.500-0.200 2.100 0 1.100-0.300 2-1 2.500-2l0.300-2.800 0.900-0.100-0.100 2.300c0.900-0.100 1.700-0.500 2.400-1.100l-0.200-3.300 0.900-0.200 0.300 2.700c0.800-1 1.200-2.200 1.200-3.500l0.900-0.100c0.200 1.400-0.100 2.800-0.800 4l1.200 0.900-1.700-0.200c-1 1.300-2.400 2-3.700 2.200-0.500 1.300-1.500 2.300-2.800 2.800 1.200 0.600 1.800 1.800 1.500 3.800-0.400 3-1.600 5.500-3.800 5.500z" fill="#000"/><text x="27" y="41.500" font-size="5.500" font-weight="700" text-anchor="middle" fill="#111" font-style="italic">行鹿客</text></svg>
<span class="t" style="left:28.5px;top:859.5px;height:18px;line-height:18px;font-size:13px;color:#a2a2a2;letter-spacing:0.66px;">渲染队列</span>
<div style="left:136px;top:863px;width:10.5px;height:10px;background:#c5a77c;"></div>
<span class="t" style="left:157.5px;top:859.5px;height:18px;line-height:18px;font-size:13px;color:#a2a2a2;letter-spacing:0.88px;">合成1</span>
<div style="left:247px;top:863px;width:10.5px;height:10px;background:#c5a77c;"></div>
<span class="t" style="left:268.5px;top:859.5px;height:18px;line-height:18px;font-size:13px;color:#a2a2a2;letter-spacing:1.48px;">好奇</span>
<div style="left:351px;top:863px;width:10.5px;height:10px;background:#c5a77c;"></div>
<span class="t" style="left:372.5px;top:859.5px;height:18px;line-height:18px;font-size:13px;color:#a2a2a2;letter-spacing:0.98px;">学习</span>
<svg style="left:438px;top:866px;" width="7" height="7" viewBox="0 0 7 7"><path d="M0.800 0.800l5 5M5.800 0.800l-5 5" stroke="#9a9a9a" stroke-width="1"/></svg>
<div style="left:453.5px;top:863px;width:10.5px;height:10px;background:#c5a77c;"></div>
<span class="t" style="left:476.5px;top:859.5px;height:18px;line-height:18px;font-size:13px;color:#d0d0d0;letter-spacing:-0.01px;">总合成</span>
<svg style="left:524.5px;top:865px;" width="10" height="9" viewBox="0 0 10 9"><path d="M0.500 1h8.500M0.500 4.500h8.500M0.500 8h8.500" stroke="#c4c4c4" stroke-width="1.200"/></svg>
<div style="left:439px;top:879px;width:95px;height:2px;background:#cfcfcf;"></div>
<span class="t" style="left:38.5px;top:883.3px;height:20px;line-height:20px;font-size:14.5px;color:#3a8ee8;font-weight:700;font-family:'DejaVu Sans','Liberation Sans',sans-serif;letter-spacing:-0.24px;">00000</span>
<span class="t" style="left:12px;top:902px;height:15px;line-height:15px;font-size:10.5px;color:#2a5c9c;letter-spacing:-0.11px;">0:00:00:00 (25.00 fps)</span>
<div style="left:127px;top:891px;width:583.5px;height:18.5px;background:#191919;border-top:1px solid #2e2e2e;border-bottom:1px solid #2e2e2e;"></div>
<svg style="left:132px;top:893px;" width="20" height="15" viewBox="0 0 20 15"><circle cx="9.500" cy="5.800" r="3.600" fill="none" stroke="#bdbdbd" stroke-width="1.300"/><path d="M6.900 8.400L2.500 12.800" stroke="#bdbdbd" stroke-width="1.600"/><path d="M13.500 8.800h4.400l-2.200 2.600z" fill="#bdbdbd"/></svg>
<svg style="left:727px;top:890px;" width="175" height="22" viewBox="0 0 175 22"><path d="M1.500 6h4M5.500 6h4v6h4M9.500 9h4" stroke="#c2c2c2" stroke-width="1.300" fill="none"/><rect x="4.500" y="4.500" width="3" height="3" fill="#c2c2c2"/><rect x="12.500" y="7.500" width="3" height="3" fill="#c2c2c2"/><rect x="12.500" y="10.800" width="3" height="3" fill="#c2c2c2"/><path d="M12.500 16l2 2.200 2-2.200z" fill="#c2c2c2"/><g transform="translate(33 0)"><path d="M5 1v8M1 5h8M2.200 2.200l5.600 5.600M7.800 2.200l-5.600 5.600" stroke="#c2c2c2" stroke-width="1.300"/><circle cx="5" cy="5" r="2" fill="#c2c2c2"/><path d="M7 11l5-2.500 5 2.500v5.500l-5 2.500-5-2.500zM7 11l5 2.500 5-2.500M12 13.500v5.500" stroke="#c2c2c2" stroke-width="1.200" fill="none"/></g><g transform="translate(67 0)"><path d="M2.500 9.500a5.500 5.500 0 0 1 11 0" fill="#c2c2c2"/><rect x="7.200" y="6" width="1.600" height="9" fill="#c2c2c2"/><rect x="0.500" y="11.500" width="15.500" height="5" fill="#8a8a8a"/><path d="M0.500 11.500h15.500" stroke="#c2c2c2" stroke-width="1.200"/></g><g transform="translate(94 0)"><path d="M1.500 7v10h10" stroke="#c2c2c2" stroke-width="1.200" fill="none"/><rect x="4" y="2.500" width="11" height="12" fill="#c2c2c2"/><path d="M6 4v9M13 4v9" stroke="#232323" stroke-width="1" stroke-dasharray="1.500 1.200"/><rect x="8" y="7" width="3.500" height="2.300" fill="#232323"/></g><g transform="translate(120 0)"><ellipse cx="8.500" cy="7.500" rx="6" ry="5" transform="rotate(-30 8.500 7.500)" fill="#8e8e8e" stroke="#c2c2c2" stroke-width="1"/><path d="M2 11.500c1 2.500 4 3.500 7.500 1.800M3 14.500c1.500 2 4.500 2 7 0.500" stroke="#c2c2c2" stroke-width="1.100" fill="none"/></g><g transform="translate(153 0)"><rect x="1" y="3.500" width="14.500" height="12.500" fill="none" stroke="#c2c2c2" stroke-width="1.300"/><path d="M3 1.500v2M6 1.500v2M9 1.500v2M12 1.500v2M2.500 6c5 0 6 8 11.500 8" stroke="#c2c2c2" stroke-width="1.200" fill="none"/></g></svg>
<div style="left:2px;top:918px;width:910px;height:1px;background:#111;"></div>
<div style="left:2px;top:919px;width:910px;height:18px;background:#2e2e2e;"></div>
<div style="left:2px;top:937px;width:910px;height:1px;background:#151515;"></div>
<div style="left:2px;top:938px;width:910px;height:19.5px;background:#4a4a4a;"></div>
<div style="left:2px;top:957.5px;width:910px;height:0.5px;background:#242424;"></div>
<div style="left:2px;top:958px;width:910px;height:19.5px;background:#2c2c2c;"></div>
<div style="left:2px;top:977.5px;width:910px;height:1px;background:#222;"></div>
<div style="left:69px;top:921px;width:1px;height:14px;background:#171717;"></div>
<div style="left:101px;top:921px;width:1px;height:14px;background:#171717;"></div>
<div style="left:134px;top:921px;width:1px;height:14px;background:#171717;"></div>
<div style="left:298px;top:921px;width:1px;height:14px;background:#171717;"></div>
<div style="left:476px;top:921px;width:1px;height:14px;background:#171717;"></div>
<div style="left:613px;top:921px;width:1px;height:14px;background:#171717;"></div>
<div style="left:779px;top:921px;width:1px;height:14px;background:#171717;"></div>
<div style="left:896px;top:921px;width:1px;height:14px;background:#171717;"></div>
<svg style="left:6px;top:922px;" width="100" height="14" viewBox="0 0 100 14"><path d="M1 6c2-3 4-4 6-4s4 1 6 4c-2 3-4 4-6 4s-4-1-6-4z" fill="#c2c2c2"/><circle cx="7" cy="6" r="2.300" fill="#2e2e2e"/><circle cx="7" cy="6" r="1" fill="#c2c2c2"/><g transform="translate(16 0)"><path d="M0.500 4h2.500l3.500-3.500v11l-3.500-3.500h-2.500z" fill="#c2c2c2"/><path d="M8 3.500c1 1.500 1 3.500 0 5M9.800 1.500c2 2.800 2 6.200 0 9" stroke="#c2c2c2" stroke-width="1.100" fill="none"/></g><circle cx="36.500" cy="6.500" r="3.200" fill="#c2c2c2"/><g transform="translate(46 -1)"><path d="M2.500 6V4.200a3 3 0 0 1 6 0V6" stroke="#c2c2c2" stroke-width="1.400" fill="none"/><rect x="0.800" y="6" width="9.400" height="6.500" rx="0.800" fill="#c2c2c2"/><rect x="4.800" y="8" width="1.400" height="2.500" fill="#2e2e2e"/></g><g transform="translate(76 -2)"><path d="M1 4.500l4.500-3.500 7 7-4.500 5.500-7-6z" fill="#c2c2c2"/><circle cx="4" cy="4.500" r="1.100" fill="#2e2e2e"/></g></svg>
<span class="t" style="left:107.5px;top:921px;height:15px;line-height:15px;font-size:11px;color:#9a9a9a;">#</span>
<span class="t" style="left:140.5px;top:919px;height:18px;line-height:18px;font-size:13px;color:#b4b4b4;letter-spacing:0.99px;">源名称</span>
<span class="t" style="left:304.5px;top:919px;height:18px;line-height:18px;font-size:13px;color:#b4b4b4;letter-spacing:0.98px;">注释</span>
<svg style="left:481px;top:922px;" width="120" height="14" viewBox="0 0 120 14"><g transform="translate(0 1)"><path d="M2.500 5.500a4 4 0 0 1 8 0z" fill="none" stroke="#c2c2c2" stroke-width="1.200"/><path d="M6.500 1v9M0.500 7.500h12M3 10h7" stroke="#c2c2c2" stroke-width="1.100"/></g><g transform="translate(17 1)"><circle cx="5" cy="5.500" r="2" fill="none" stroke="#c2c2c2" stroke-width="1.200"/><path d="M5 0v2.300M5 8.700v2.300M0 5.500h2M8 5.500h2M1.500 2l1.500 1.500M7 7.500l1.500 1.500M8.500 2l-1.500 1.500M3 7.500l-1.500 1.500" stroke="#c2c2c2" stroke-width="1"/></g><path d="M32 2l9 9.500" stroke="#c2c2c2" stroke-width="1.400" stroke-dasharray="1.800 1.300"/><text x="46" y="11" font-size="13.500" font-style="italic" fill="#c2c2c2" style="font-family:'Liberation Serif',serif">fx</text><g transform="translate(60 0)"><path d="M0.800 3v9.500h10" stroke="#c2c2c2" stroke-width="1" fill="none"/><rect x="2.500" y="1" width="9.500" height="9.500" fill="#c2c2c2"/><path d="M4 2v7.500M10.500 2v7.500" stroke="#2e2e2e" stroke-width="0.900" stroke-dasharray="1.200 1"/><rect x="5.800" y="4.500" width="3" height="2" fill="#2e2e2e"/></g><g transform="translate(75 0)"><ellipse cx="7" cy="5.500" rx="5" ry="4" transform="rotate(-30 7 5.500)" fill="#858585" stroke="#c2c2c2" stroke-width="0.900"/><path d="M1.500 9c1 2 3.500 2.800 6.500 1.500" stroke="#c2c2c2" stroke-width="1" fill="none"/></g><g transform="translate(91 1)"><circle cx="5.500" cy="5.500" r="4.700" fill="none" stroke="#c2c2c2" stroke-width="1.100"/><path d="M2.200 8.800a4.700 4.700 0 0 0 6.600-6.600z" fill="#c2c2c2"/></g><g transform="translate(105 0)"><path d="M6 0.800l5 2.600v6l-5 2.600-5-2.600v-6zM1 3.400l5 2.600 5-2.600M6 6v6" stroke="#c2c2c2" stroke-width="1.100" fill="none"/></g></svg>
<span class="t" style="left:620.5px;top:919px;height:18px;line-height:18px;font-size:13px;color:#b4b4b4;letter-spacing:-0.02px;">模式</span>
<span class="t" style="left:696px;top:921px;height:15px;line-height:15px;font-size:11px;color:#8a8a8a;">T</span>
<span class="t" style="left:713px;top:921px;height:15px;line-height:15px;font-size:11px;color:#8a8a8a;letter-spacing:0.44px;">TrkMat</span>
<span class="t" style="left:786.5px;top:919px;height:18px;line-height:18px;font-size:13px;color:#b4b4b4;letter-spacing:-0.02px;">父级</span>
<div style="left:6px;top:939.5px;width:12.8px;height:16px;background:#3a3a3a;"></div>
<div style="left:36.5px;top:939.5px;width:12.8px;height:16px;background:#3a3a3a;"></div>
<div style="left:51px;top:939.5px;width:12.8px;height:16px;background:#3a3a3a;"></div>
<svg style="left:7px;top:942px;" width="12" height="10" viewBox="0 0 12 10"><path d="M0.500 5c1.700-2.700 3.500-3.800 5.500-3.800s3.800 1.100 5.500 3.800c-1.700 2.700-3.500 3.800-5.500 3.800s-3.800-1.100-5.500-3.800z" fill="#c2c2c2"/><circle cx="6" cy="5" r="2.100" fill="#3a3a3a"/><circle cx="6" cy="5" r="0.900" fill="#c2c2c2"/></svg>
<svg style="left:74px;top:943.5px;" width="9" height="9" viewBox="0 0 9 9"><path d="M0.500 0.500L8 4.300L0.500 8.200Z" fill="#c8c8c8"/></svg>
<div style="left:87px;top:940px;width:15px;height:15.5px;background:#c6a97e;"></div>
<span class="t" style="left:108px;top:938.8px;height:18px;line-height:18px;font-size:12.5px;color:#d2d2d2;font-weight:700;font-family:'Liberation Serif','Noto Serif CJK SC',serif;">1</span>
<svg style="left:137px;top:940px;" width="17" height="16" viewBox="0 0 17 16"><rect x="0.500" y="1" width="15.500" height="12" fill="#d4d4d4" stroke="#8a8a8a" stroke-width="0.600"/><path d="M2 1.500v11M14.500 1.500v11" stroke="#555" stroke-width="1" stroke-dasharray="1.300 1.100"/><rect x="3.200" y="2.500" width="10" height="8" fill="#e8e8e8"/><circle cx="6.300" cy="5.500" r="2.100" fill="#2e6fd0"/><circle cx="10.200" cy="5.500" r="2.100" fill="#d03a2e"/><circle cx="8.300" cy="8" r="2.100" fill="#2e9e4a"/><path d="M0.500 14.800h15.500" stroke="#d4d4d4" stroke-width="1.200"/></svg>
<div style="left:156px;top:938.5px;width:141.5px;height:18.8px;background:#474747;border:1.500px solid #b2b2b2;"></div>
<span class="t" style="left:160px;top:940px;height:16px;line-height:16px;font-size:11.5px;color:#e0e0e0;letter-spacing:-0.50px;">学习</span>
<div style="left:481px;top:939.5px;width:12.8px;height:16px;background:#3a3a3a;"></div>
<div style="left:496px;top:939.5px;width:12.8px;height:16px;background:#3a3a3a;"></div>
<div style="left:511px;top:939.5px;width:12.8px;height:16px;background:#3a3a3a;"></div>
<div style="left:526px;top:939.5px;width:12.8px;height:16px;background:#3a3a3a;"></div>
<div style="left:556px;top:939.5px;width:12.8px;height:16px;background:#3a3a3a;"></div>
<div style="left:571px;top:939.5px;width:12.8px;height:16px;background:#3a3a3a;"></div>
<div style="left:586px;top:939.5px;width:12.8px;height:16px;background:#3a3a3a;"></div>
<svg style="left:481px;top:941px;" width="14" height="13" viewBox="0 0 14 13"><g transform="translate(0.3 1)"><path d="M2.500 5.500a4 4 0 0 1 8 0z" fill="none" stroke="#d0d0d0" stroke-width="1.200"/><path d="M6.500 1v9M0.500 7.500h12M3 10h7" stroke="#d0d0d0" stroke-width="1.100"/></g></svg>
<svg style="left:511px;top:940px;" width="14" height="15" viewBox="0 0 14 15"><path d="M2.500 12.500l9-10" stroke="#c8c8c8" stroke-width="1.500"/></svg>
<svg style="left:526px;top:940px;" width="14" height="15" viewBox="0 0 14 15"><text x="1" y="11.500" font-size="13.500" font-style="italic" fill="#d0d0d0" style="font-family:'Liberation Serif',serif">fx</text></svg>
<div style="left:617px;top:939px;width:69.5px;height:17.5px;background:#1c1c1c;"></div>
<span class="t" style="left:624px;top:940px;height:16px;line-height:16px;font-size:11.5px;color:#d8d8d8;letter-spacing:-1.00px;">正常</span>
<svg style="left:673px;top:945px;" width="8.5" height="6" viewBox="0 0 8.5 6"><path d="M0.700 0.900l3.55 3.600 3.55-3.600" stroke="#c4c4c4" stroke-width="1.150" fill="none"/></svg>
<div style="left:691px;top:939.5px;width:12.8px;height:14px;background:#3a3a3a;"></div>
<svg style="left:784px;top:941px;" width="14" height="14" viewBox="0 0 14 14"><path d="M7.200 7.200c-0.800-0.900 0.300-2.200 1.500-1.500 1.600 0.900 1.200 3.400-0.700 4.100-2.600 0.900-4.900-1.300-4.500-3.900 0.500-3.200 4.200-4.800 6.900-3.100 2.300 1.400 3 4.300 1.800 6.700" stroke="#b8b8b8" stroke-width="1.200" fill="none"/></svg>
<div style="left:798px;top:938px;width:6px;height:19.5px;background:#555;"></div>
<div style="left:803px;top:939px;width:89.5px;height:17.5px;background:#1c1c1c;"></div>
<span class="t" style="left:809.5px;top:940px;height:16px;line-height:16px;font-size:11.5px;color:#d8d8d8;">无</span>
<svg style="left:880px;top:945px;" width="8.5" height="6" viewBox="0 0 8.5 6"><path d="M0.700 0.900l3.55 3.600 3.55-3.600" stroke="#c4c4c4" stroke-width="1.150" fill="none"/></svg>
<div style="left:6px;top:959.5px;width:12.8px;height:16px;background:#262626;"></div>
<div style="left:51px;top:959.5px;width:12.8px;height:16px;background:#262626;"></div>
<svg style="left:74px;top:963.5px;" width="9" height="9" viewBox="0 0 9 9"><path d="M0.500 0.500L8 4.300L0.500 8.200Z" fill="#c8c8c8"/></svg>
<div style="left:87px;top:960px;width:15px;height:15.5px;background:#c6a97e;"></div>
<span class="t" style="left:108px;top:958.8px;height:18px;line-height:18px;font-size:12.5px;color:#d2d2d2;font-weight:700;font-family:'Liberation Serif','Noto Serif CJK SC',serif;">2</span>
<svg style="left:137px;top:960px;" width="17" height="16" viewBox="0 0 17 16"><rect x="0.500" y="1" width="15.500" height="12" fill="#d4d4d4" stroke="#8a8a8a" stroke-width="0.600"/><path d="M2 1.500v11M14.500 1.500v11" stroke="#555" stroke-width="1" stroke-dasharray="1.300 1.100"/><rect x="3.200" y="2.500" width="10" height="8" fill="#e8e8e8"/><circle cx="6.300" cy="5.500" r="2.100" fill="#2e6fd0"/><circle cx="10.200" cy="5.500" r="2.100" fill="#d03a2e"/><circle cx="8.300" cy="8" r="2.100" fill="#2e9e4a"/><path d="M0.500 14.800h15.500" stroke="#d4d4d4" stroke-width="1.200"/></svg>
<span class="t" style="left:160px;top:960px;height:16px;line-height:16px;font-size:11.5px;color:#d6d6d6;font-weight:700;letter-spacing:-0.50px;">好奇</span>
<div style="left:481px;top:959.5px;width:12.8px;height:16px;background:#262626;"></div>
<div style="left:496px;top:959.5px;width:12.8px;height:16px;background:#262626;"></div>
<div style="left:511px;top:959.5px;width:12.8px;height:16px;background:#262626;"></div>
<div style="left:556px;top:959.5px;width:12.8px;height:16px;background:#262626;"></div>
<div style="left:571px;top:959.5px;width:12.8px;height:16px;background:#262626;"></div>
<div style="left:586px;top:959.5px;width:12.8px;height:16px;background:#262626;"></div>
<svg style="left:481px;top:961px;" width="14" height="13" viewBox="0 0 14 13"><g transform="translate(0.3 1)"><path d="M2.500 5.500a4 4 0 0 1 8 0z" fill="none" stroke="#d0d0d0" stroke-width="1.200"/><path d="M6.500 1v9M0.500 7.500h12M3 10h7" stroke="#d0d0d0" stroke-width="1.100"/></g></svg>
<svg style="left:511px;top:960px;" width="14" height="15" viewBox="0 0 14 15"><path d="M2.500 12.500l9-10" stroke="#c8c8c8" stroke-width="1.500"/></svg>
<div style="left:617px;top:959px;width:69.5px;height:17.5px;background:#1c1c1c;"></div>
<span class="t" style="left:624px;top:960px;height:16px;line-height:16px;font-size:11.5px;color:#d8d8d8;letter-spacing:-1.00px;">正常</span>
<svg style="left:673px;top:965px;" width="8.5" height="6" viewBox="0 0 8.5 6"><path d="M0.700 0.900l3.55 3.600 3.55-3.600" stroke="#c4c4c4" stroke-width="1.150" fill="none"/></svg>
<div style="left:691px;top:959.5px;width:12.8px;height:14px;background:#262626;"></div>
<div style="left:710px;top:959px;width:64.5px;height:17.5px;background:#1c1c1c;"></div>
<span class="t" style="left:716.5px;top:960px;height:16px;line-height:16px;font-size:11.5px;color:#d8d8d8;">无</span>
<svg style="left:762.5px;top:965px;" width="8.5" height="6" viewBox="0 0 8.5 6"><path d="M0.700 0.900l3.55 3.600 3.55-3.600" stroke="#c4c4c4" stroke-width="1.150" fill="none"/></svg>
<svg style="left:784px;top:961px;" width="14" height="14" viewBox="0 0 14 14"><path d="M7.200 7.200c-0.800-0.900 0.300-2.200 1.500-1.500 1.600 0.900 1.200 3.400-0.700 4.100-2.600 0.900-4.900-1.300-4.500-3.900 0.500-3.200 4.200-4.800 6.900-3.100 2.300 1.400 3 4.300 1.800 6.700" stroke="#b8b8b8" stroke-width="1.200" fill="none"/></svg>
<div style="left:803px;top:959px;width:89.5px;height:17.5px;background:#1c1c1c;"></div>
<span class="t" style="left:809.5px;top:960px;height:16px;line-height:16px;font-size:11.5px;color:#d8d8d8;">无</span>
<svg style="left:880px;top:965px;" width="8.5" height="6" viewBox="0 0 8.5 6"><path d="M0.700 0.900l3.55 3.600 3.55-3.600" stroke="#c4c4c4" stroke-width="1.150" fill="none"/></svg>
<div style="left:912px;top:918px;width:1px;height:463px;background:#0c0c0c;"></div>
<div style="left:915px;top:888.5px;width:1625px;height:9px;background:#646464;border:1px solid #111;border-radius:4px;"></div>
<div style="left:914.5px;top:889px;width:6px;height:8px;background:#3b8fea;border-radius:4px 0 0 4px;"></div>
<div style="left:2534px;top:889px;width:6.5px;height:8px;background:#3b8fea;border-radius:0 4px 4px 0;"></div>
<svg style="left:913px;top:897px;" width="1630" height="21" viewBox="0 0 1630 21"><g font-size="10" fill="#a0a0a0"><text x="0.300" y="10.500">0000</text><text x="71.3" y="10.500" text-anchor="middle">00010</text><rect x="71.3" y="15" width="1.200" height="5" fill="#8a8a8a"/><text x="135.6" y="10.500" text-anchor="middle">00020</text><rect x="135.6" y="15" width="1.200" height="5" fill="#8a8a8a"/><text x="200.0" y="10.500" text-anchor="middle">00030</text><rect x="200.0" y="15" width="1.200" height="5" fill="#8a8a8a"/><text x="264.3" y="10.500" text-anchor="middle">00040</text><rect x="264.3" y="15" width="1.200" height="5" fill="#8a8a8a"/><text x="328.6" y="10.500" text-anchor="middle">00050</text><rect x="328.6" y="15" width="1.200" height="5" fill="#8a8a8a"/><text x="392.9" y="10.500" text-anchor="middle">00060</text><rect x="392.9" y="15" width="1.200" height="5" fill="#8a8a8a"/><text x="457.3" y="10.500" text-anchor="middle">00070</text><rect x="457.3" y="15" width="1.200" height="5" fill="#8a8a8a"/><text x="521.6" y="10.500" text-anchor="middle">00080</text><rect x="521.6" y="15" width="1.200" height="5" fill="#8a8a8a"/><text x="585.9" y="10.500" text-anchor="middle">00090</text><rect x="585.9" y="15" width="1.200" height="5" fill="#8a8a8a"/><text x="650.2" y="10.500" text-anchor="middle">00100</text><rect x="650.2" y="15" width="1.200" height="5" fill="#8a8a8a"/><text x="714.6" y="10.500" text-anchor="middle">00110</text><rect x="714.6" y="15" width="1.200" height="5" fill="#8a8a8a"/><text x="778.9" y="10.500" text-anchor="middle">00120</text><rect x="778.9" y="15" width="1.200" height="5" fill="#8a8a8a"/><text x="843.2" y="10.500" text-anchor="middle">00130</text><rect x="843.2" y="15" width="1.200" height="5" fill="#8a8a8a"/><text x="907.5" y="10.500" text-anchor="middle">00140</text><rect x="907.5" y="15" width="1.200" height="5" fill="#8a8a8a"/><text x="971.9" y="10.500" text-anchor="middle">00150</text><rect x="971.9" y="15" width="1.200" height="5" fill="#8a8a8a"/><text x="1036.2" y="10.500" text-anchor="middle">00160</text><rect x="1036.2" y="15" width="1.200" height="5" fill="#8a8a8a"/><text x="1100.5" y="10.500" text-anchor="middle">00170</text><rect x="1100.5" y="15" width="1.200" height="5" fill="#8a8a8a"/><text x="1164.8" y="10.500" text-anchor="middle">00180</text><rect x="1164.8" y="15" width="1.200" height="5" fill="#8a8a8a"/><text x="1229.2" y="10.500" text-anchor="middle">00190</text><rect x="1229.2" y="15" width="1.200" height="5" fill="#8a8a8a"/><text x="1293.5" y="10.500" text-anchor="middle">00200</text><rect x="1293.5" y="15" width="1.200" height="5" fill="#8a8a8a"/><text x="1357.8" y="10.500" text-anchor="middle">00210</text><rect x="1357.8" y="15" width="1.200" height="5" fill="#8a8a8a"/><text x="1422.1" y="10.500" text-anchor="middle">00220</text><rect x="1422.1" y="15" width="1.200" height="5" fill="#8a8a8a"/><text x="1486.5" y="10.500" text-anchor="middle">00230</text><rect x="1486.5" y="15" width="1.200" height="5" fill="#8a8a8a"/><text x="1550.8" y="10.500" text-anchor="middle">00240</text><rect x="1550.8" y="15" width="1.200" height="5" fill="#8a8a8a"/><text x="1613.6" y="10.500" text-anchor="middle">00250</text><rect x="1615.1" y="15" width="1.200" height="5" fill="#8a8a8a"/></g></svg>
<div style="left:913px;top:917px;width:1628px;height:1.5px;background:#0a0a0a;"></div>
<div style="left:915px;top:918.5px;width:1625px;height:14.5px;background:#636363;"></div>
<div style="left:914.5px;top:918.5px;width:5px;height:14.5px;background:#3b8fea;border-radius:3px 0 0 3px;"></div>
<div style="left:2534px;top:918.5px;width:6.5px;height:14.5px;background:#3b8fea;border-radius:0 3px 3px 0;"></div>
<div style="left:913px;top:933px;width:1627px;height:5px;background:#262626;border-top:1px solid #0c0c0c;border-bottom:1px solid #0c0c0c;"></div>
<div style="left:921px;top:934.3px;width:5.5px;height:2.7px;background:#2cc23e;"></div>
<div style="left:946px;top:934.3px;width:6.5px;height:2.7px;background:#2cc23e;"></div>
<div style="left:978px;top:934.3px;width:6.5px;height:2.7px;background:#2cc23e;"></div>
<div style="left:1023px;top:934.3px;width:6.5px;height:2.7px;background:#2cc23e;"></div>
<div style="left:1042px;top:934.3px;width:816px;height:2.7px;background:#2cc23e;"></div>
<div style="left:913px;top:938px;width:1627px;height:19.5px;background:#484848;"></div>
<div style="left:913px;top:958px;width:1627px;height:19.5px;background:#333;"></div>
<div style="left:913px;top:978px;width:1621.5px;height:402px;background:#303030;"></div>
<div style="left:913px;top:978px;width:8px;height:402px;background:#2a2a2a;"></div>
<div style="left:913px;top:957.5px;width:1627px;height:1px;background:#2a2a2a;"></div>
<div style="left:913px;top:977.5px;width:1627px;height:1px;background:#282828;"></div>
<div style="left:921.5px;top:940px;width:1611.5px;height:17px;background:#ae9c78;border-radius:3px 3px 0 0;border-top:1.200px solid #e6dccb;box-shadow:inset 0 -1.500px 1px rgba(90,80,60,0.450);"></div>
<div style="left:921.5px;top:960px;width:1611.5px;height:16.5px;background:#776c59;border-radius:3px 3px 0 0;"></div>
<div style="left:2533px;top:938px;width:7px;height:40px;background:#4e4e4e;"></div>
<svg style="left:921px;top:940px;" width="1613" height="40" viewBox="0 0 1613 40"><path d="M0.500 1.200h3.600c-2 0.300-3.300 1.500-3.600 3.800zM1612 1.200h-3.600c2 0.300 3.300 1.500 3.600 3.800z" fill="#0a0a0a"/><path d="M0.500 20h3c-1.700 0.300-2.700 1.300-3 3zM1612 20h-3c1.700 0.300 2.700 1.300 3 3z" fill="#2a2620"/></svg>
<div style="left:2540.5px;top:882px;width:17.5px;height:499px;background:#232323;"></div>
<svg style="left:2543px;top:919px;" width="15" height="36" viewBox="0 0 15 36"><path d="M1.500 1h11.500v9l-5.750 5-5.750-5z" fill="#bdbdbd"/><path d="M1.500 28l5.500-4.500v2.500h6.500v4.500h-6.500v2.500z" fill="#c8c8c8"/><circle cx="6.500" cy="29.800" r="1.800" fill="#232323" stroke="#c8c8c8" stroke-width="0.800"/></svg>
<div style="left:920px;top:906px;width:1.4px;height:475px;background:#4a9cf5;"></div>
<svg style="left:914px;top:902px;" width="14" height="16" viewBox="0 0 14 16"><path d="M1 4.500a3 3 0 0 1 3-3h5.500a3 3 0 0 1 3 3v3.500l-5.750 7-5.750-7z" fill="#3d93f2"/><path d="M4.500 7h4.500M6.750 7v3" stroke="#0e2a50" stroke-width="1"/></svg>
<div style="left:2px;top:1381px;width:1018px;height:1px;background:#0a0a0a;"></div>
<div style="left:2px;top:1382px;width:2556px;height:16px;background:#232323;"></div>
<svg style="left:6px;top:1383px;" width="54" height="15" viewBox="0 0 54 15"><rect x="2.500" y="1.500" width="7" height="7" fill="none" stroke="#3a86e0" stroke-width="1.200"/><rect x="5.500" y="4.500" width="7.500" height="7.500" fill="#232323" stroke="#3a86e0" stroke-width="1.200"/><rect x="8.200" y="7.200" width="2.200" height="2.200" fill="#3a86e0"/><circle cx="25.500" cy="5.500" r="4.200" fill="none" stroke="#3a86e0" stroke-width="1.200"/><rect x="25" y="5.500" width="6.500" height="6.500" fill="#232323" stroke="#3a86e0" stroke-width="1.200"/><path d="M38.500 6.500l3-3.500v2.200h5v-2.200l3 3.500-3 3.500v-2.200h-5v2.200z" fill="#9e9e9e"/><path d="M42.500 1.500c-1.500 1.500-1.500 9 0 11M45.500 1.500c1.500 1.500 1.500 9 0 11" stroke="#cfcfcf" stroke-width="1" fill="none"/></svg>
<svg style="left:916px;top:1383px;" width="104" height="15" viewBox="0 0 104 15"><path d="M1.500 8.500l3.500-4 2 2.200 1.500-1.500 3 3.300z" fill="#cfcfcf"/><circle cx="28" cy="7.500" r="4.600" fill="none" stroke="#a8a8a8" stroke-width="1.700"/><path d="M35 6.500h36" stroke="#454545" stroke-width="1.600"/><path d="M82.500 11l6-7 3 3.500 2.500-3 6.500 6.500z" fill="#cfcfcf"/><path d="M82.500 11l6-7 2 2.300-4 4.700z" fill="#a8a8a8"/></svg>
<div style="left:16px;top:110px;width:354.8px;height:97px;border:2.600px solid #de2833;"></div>
<svg style="left:370px;top:220px;" width="110" height="70" viewBox="0 0 110 70"><path d="M5.200 6.200L101.200 60.800" stroke="#d81e48" stroke-width="1.700"/><path d="M3.500 5.200l7.200 0.600-3 5z" fill="#e0264e"/></svg>
</div></body></html>
